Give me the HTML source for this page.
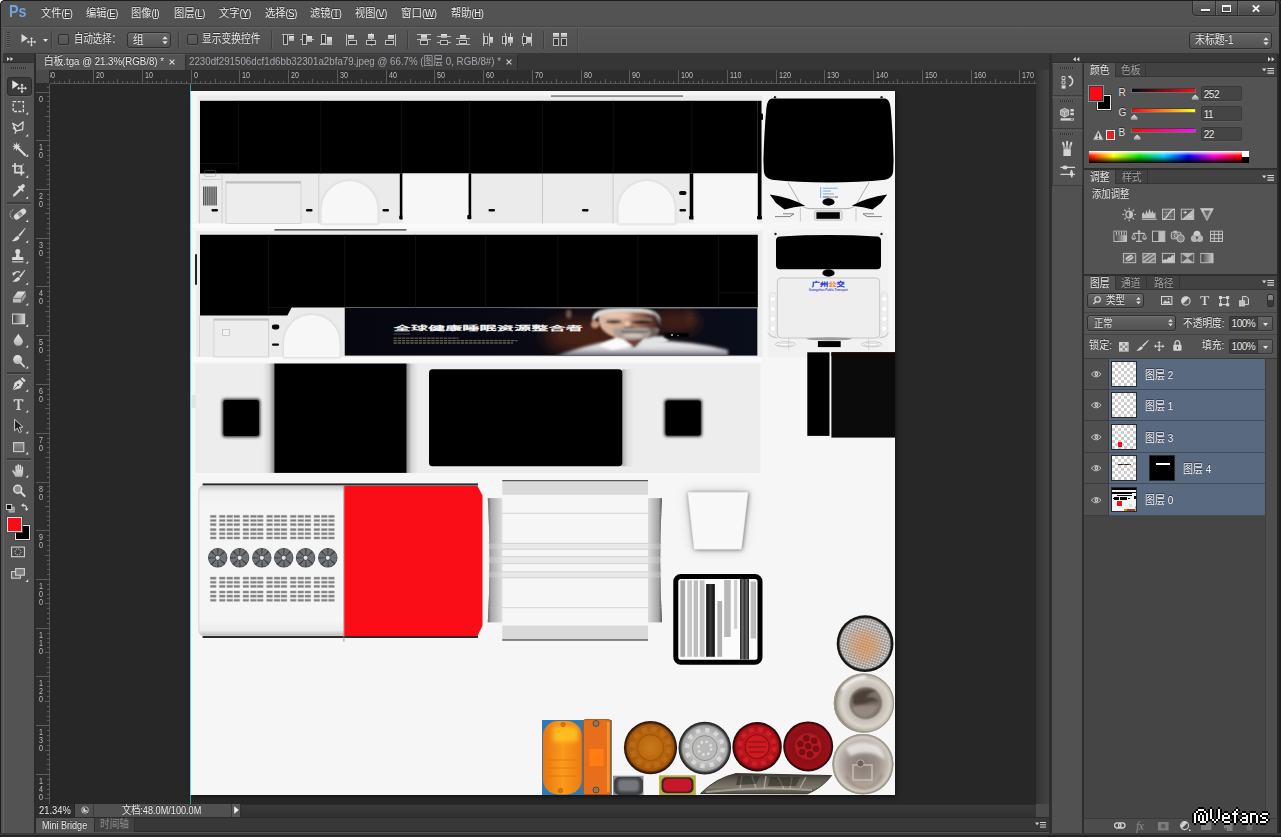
<!DOCTYPE html>
<html lang="zh"><head><meta charset="utf-8"><title>Photoshop</title><style>
html,body{margin:0;padding:0;background:#161616;}
body{width:1281px;height:837px;overflow:hidden;position:relative;font-family:"Liberation Sans","Noto Sans CJK SC",sans-serif;font-size:12px;color:#e6e6e6;}
div{position:absolute;box-sizing:border-box;}
svg{position:absolute;overflow:visible}
.t{white-space:nowrap;line-height:14px;font-size:12px;color:#e6e6e6;text-shadow:0 -1px 0 rgba(0,0,0,.5);}

.menubar{left:0;top:0;width:1281px;height:27px;}
.optbar{left:3px;top:27px;width:1275px;height:27px;background:linear-gradient(#565656,#515151);border-top:1px solid #636363;border-bottom:1px solid #373737;border-left:1px solid #606060}
.tabbar{left:36px;top:54px;width:1013px;height:16px;background:#363636;}
.ruler{background:#2d2d2d;}
.canvas{left:50px;top:84px;width:986px;height:719.5px;background:#272727;overflow:hidden}
.sep{width:2px;height:18px;top:31px;background:#3e3e3e;border-right:1px solid #5d5d5d}
.cb{width:11px;height:11px;top:34px;background:linear-gradient(#5f5f5f,#555);border:1px solid #2f2f2f;border-radius:2px;box-shadow:0 1px 0 #626262}
.dd{background:linear-gradient(#656565,#525252);border:1px solid #2e2e2e;border-radius:3px;box-shadow:0 1px 0 #5e5e5e, inset 0 1px 0 #727272}
.rl{font-size:8.5px;line-height:9px;color:#b9bec4;white-space:nowrap;transform:scaleX(.84);transform-origin:0 0}
.tsep{left:7px;width:24px;height:2px;background:#3b3b3b;border-bottom:1px solid #616161}

.doc{left:191px;top:91px;width:704px;height:704px;background:#f6f6f6;box-shadow:1px 2px 4px rgba(0,0,0,.55);overflow:hidden}

.ptabrow{left:1084px;width:193px;height:14px;background:#424242;border-bottom:1px solid #353535}
.ptab{height:14px;background:#535353;border-right:1px solid #343434}
.ptabi{height:14px;border-right:1px solid #343434}
.pbody{left:1084px;width:193px;background:#535353}
.vbox{background:#454545;border:1px solid #3a3a3a;border-radius:2px;box-shadow:0 1px 0 #5d5d5d}
.cgrp{left:1052px;width:30px;background:#525252;border:1px solid #3c3c3c;border-top-color:#5c5c5c}
.lrow{left:1108.6px;width:156.6px;background:#596980;border-bottom:1px solid #404b5c}
.eye{left:1084px;width:24.6px;background:#4f4f4f;border-bottom:1px solid #3c3c3c;border-right:1px solid #3c3c3c}
.th{width:25.4px;height:25.8px;border:1px solid #2a2a2a;background-color:#fff;background-image:linear-gradient(45deg,#ccc 25%,transparent 25%,transparent 75%,#ccc 75%),linear-gradient(45deg,#ccc 25%,transparent 25%,transparent 75%,#ccc 75%);background-size:6px 6px;background-position:0 0,3px 3px;overflow:hidden}
</style></head><body><!-- s_top --><div style="left:0px;top:0px;width:5px;height:5px;background:#fff"></div><div style="left:0px;top:0px;width:1281px;height:837px;background:#535353;border-radius:5px 4px 0 0"></div><div class="menubar"><div style="left:8.6px;top:3.3px;font:bold 17px/18px 'Liberation Sans',sans-serif;color:#6fa4de;transform:scaleX(.84);transform-origin:0 0">Ps</div><div class="t" style="left:41px;top:6px;font-size:11px;line-height:14px;color:#ececec;transform:scaleX(0.930);transform-origin:0 0">文件<span style="font-size:10px;letter-spacing:-0.3px">(<u>F</u>)</span></div><div class="t" style="left:86px;top:6px;font-size:11px;line-height:14px;color:#ececec;transform:scaleX(0.930);transform-origin:0 0">编辑<span style="font-size:10px;letter-spacing:-0.3px">(<u>E</u>)</span></div><div class="t" style="left:131px;top:6px;font-size:11px;line-height:14px;color:#ececec;transform:scaleX(0.930);transform-origin:0 0">图像<span style="font-size:10px;letter-spacing:-0.3px">(<u>I</u>)</span></div><div class="t" style="left:173.5px;top:6px;font-size:11px;line-height:14px;color:#ececec;transform:scaleX(0.930);transform-origin:0 0">图层<span style="font-size:10px;letter-spacing:-0.3px">(<u>L</u>)</span></div><div class="t" style="left:218.5px;top:6px;font-size:11px;line-height:14px;color:#ececec;transform:scaleX(0.930);transform-origin:0 0">文字<span style="font-size:10px;letter-spacing:-0.3px">(<u>Y</u>)</span></div><div class="t" style="left:264.5px;top:6px;font-size:11px;line-height:14px;color:#ececec;transform:scaleX(0.930);transform-origin:0 0">选择<span style="font-size:10px;letter-spacing:-0.3px">(<u>S</u>)</span></div><div class="t" style="left:309.5px;top:6px;font-size:11px;line-height:14px;color:#ececec;transform:scaleX(0.930);transform-origin:0 0">滤镜<span style="font-size:10px;letter-spacing:-0.3px">(<u>T</u>)</span></div><div class="t" style="left:354.5px;top:6px;font-size:11px;line-height:14px;color:#ececec;transform:scaleX(0.930);transform-origin:0 0">视图<span style="font-size:10px;letter-spacing:-0.3px">(<u>V</u>)</span></div><div class="t" style="left:401px;top:6px;font-size:11px;line-height:14px;color:#ececec;transform:scaleX(0.960);transform-origin:0 0">窗口<span style="font-size:10px;letter-spacing:-0.3px">(<u>W</u>)</span></div><div class="t" style="left:450.5px;top:6px;font-size:11px;line-height:14px;color:#ececec;transform:scaleX(0.930);transform-origin:0 0">帮助<span style="font-size:10px;letter-spacing:-0.3px">(<u>H</u>)</span></div></div><div style="left:1192px;top:-1px;width:84px;height:17px;background:linear-gradient(#666,#474747);border:1px solid #2b2b2b;border-radius:0 0 4px 4px;box-shadow:0 1px 0 #5f5f5f, inset 0 0 0 1px rgba(255,255,255,.06)"></div><div style="left:1215px;top:0px;width:1px;height:15px;background:#2f2f2f;box-shadow:1px 0 0 #626262"></div><div style="left:1237px;top:0px;width:1px;height:15px;background:#2f2f2f;box-shadow:1px 0 0 #626262"></div><div style="left:1200.5px;top:8.5px;width:9px;height:2.5px;background:#f2f2f2;box-shadow:0 1px 1px rgba(0,0,0,.5)"></div><div style="left:1222px;top:4.5px;width:9px;height:7px;border:1.5px solid #f2f2f2;border-top-width:2px;box-shadow:0 1px 1px rgba(0,0,0,.5)"></div><svg style="left:1252px;top:4.5px;" width="8" height="7" viewBox="0 0 8 7"><path d="M0.8 0.3 L7.2 6.7 M7.2 0.3 L0.8 6.7" stroke="#f2f2f2" stroke-width="1.9"/></svg><div style="left:3px;top:26px;width:1275px;height:1px;background:#454545"></div><div class="optbar"></div><div style="left:7px;top:32px;width:3px;height:16px;background:repeating-linear-gradient(#333 0,#333 1px,#686868 1px,#686868 2px)"></div><svg style="left:21px;top:33px;" width="16" height="13" viewBox="0 0 16 13"><path d="M0.5 1 L0.5 9.5 L6.8 5.2Z" fill="#d8d8d8"/><path d="M10.5 5.2 V12.6 M6.8 8.9 H14.2" stroke="#d8d8d8" stroke-width="1"/><path d="M10.5 4.2 l-1.6 1.8 h3.2z M10.5 13.6 l-1.6 -1.8 h3.2z M5.8 8.9 l1.8 -1.6 v3.2z M15.2 8.9 l-1.8 -1.6 v3.2z" fill="#d8d8d8"/></svg><svg style="left:42.5px;top:39px;" width="5" height="3" viewBox="0 0 5 3"><path d="M0 0 H5 L2.5 3Z" fill="#e0e0e0"/></svg><div class="sep" style="left:51px;top:31px;width:2px;height:18px;"></div><div class="cb" style="left:58px;top:34px;width:11px;height:11px;"></div><div class="t" style="left:74px;top:32.4px;font-size:12px;line-height:14px;transform:scaleX(0.7833);transform-origin:0 0;">自动选择：</div><div class="dd" style="left:126.5px;top:31.5px;width:44.5px;height:16.5px;"></div><div class="t" style="left:132.6px;top:32.6px;font-size:12px;line-height:14px;transform:scaleX(0.8833);transform-origin:0 0;">组</div><svg style="left:162px;top:36px;" width="6" height="9" viewBox="0 0 6 9"><path d="M0.3 3.2 L3 0.2 L5.7 3.2Z M0.3 5.3 L3 8.3 L5.7 5.3Z" fill="#e2e2e2"/></svg><div class="sep" style="left:178px;top:31px;width:2px;height:18px;"></div><div class="cb" style="left:186.5px;top:34px;width:11px;height:11px;"></div><div class="t" style="left:201.6px;top:32.4px;font-size:12px;line-height:14px;transform:scaleX(0.8139);transform-origin:0 0;">显示变换控件</div><div class="sep" style="left:271px;top:31px;width:2px;height:18px;"></div><div class="sep" style="left:407px;top:31px;width:2px;height:18px;"></div><div class="sep" style="left:543px;top:31px;width:2px;height:18px;"></div><div style="left:576.5px;top:28px;width:2px;height:25px;background:#474747;border-right:1px solid #5c5c5c"></div><svg style="left:0;top:0" width="600" height="54" viewBox="0 0 600 54" shape-rendering="crispEdges"><defs><linearGradient id="fg" x1="0" y1="0" x2="0" y2="1"><stop offset="0" stop-color="#e6e6e6"/><stop offset="1" stop-color="#a8a8a8"/></linearGradient></defs><rect x="282" y="34" width="12" height="1" fill="#bcbcbc"/><rect x="283.5" y="34.5" width="4" height="10" fill="#3a3a3a" stroke="#bcbcbc" stroke-width="1"/><rect x="289" y="36" width="5" height="5" fill="url(#fg)"/><rect x="300" y="39" width="14" height="1" fill="#bcbcbc"/><rect x="302.5" y="34.5" width="4" height="10" fill="#3a3a3a" stroke="#bcbcbc" stroke-width="1"/><rect x="307" y="36" width="5" height="6" fill="url(#fg)"/><rect x="320" y="44" width="12" height="1" fill="#bcbcbc"/><rect x="321.5" y="34.5" width="4" height="9" fill="#3a3a3a" stroke="#bcbcbc" stroke-width="1"/><rect x="327" y="37" width="5" height="7" fill="url(#fg)"/><rect x="346" y="34" width="1" height="12" fill="#bcbcbc"/><rect x="348" y="35" width="6" height="4" fill="url(#fg)"/><rect x="348.5" y="40.5" width="8" height="4" fill="#3a3a3a" stroke="#bcbcbc" stroke-width="1"/><rect x="371" y="33" width="1" height="13" fill="#bcbcbc"/><rect x="368" y="34" width="6" height="5" fill="url(#fg)"/><rect x="366.5" y="40.5" width="9" height="4" fill="#3a3a3a" stroke="#bcbcbc" stroke-width="1"/><rect x="395" y="34" width="1" height="12" fill="#bcbcbc"/><rect x="388" y="35" width="6" height="4" fill="url(#fg)"/><rect x="385.5" y="40.5" width="8" height="4" fill="#3a3a3a" stroke="#bcbcbc" stroke-width="1"/><rect x="417" y="34" width="14" height="1" fill="#bcbcbc"/><rect x="421" y="35" width="6" height="4" fill="url(#fg)"/><rect x="417" y="39" width="14" height="1" fill="#bcbcbc"/><rect x="420.5" y="40.5" width="7" height="4" fill="#3a3a3a" stroke="#bcbcbc" stroke-width="1"/><rect x="441" y="34" width="6" height="4" fill="url(#fg)"/><rect x="437" y="36" width="14" height="1" fill="#bcbcbc"/><rect x="440.5" y="40.5" width="7" height="4" fill="#3a3a3a" stroke="#bcbcbc" stroke-width="1"/><rect x="437" y="42" width="3" height="1" fill="#bcbcbc"/><rect x="448" y="42" width="3" height="1" fill="#bcbcbc"/><rect x="460" y="35" width="6" height="4" fill="url(#fg)"/><rect x="456" y="38" width="14" height="1" fill="#bcbcbc"/><rect x="459.5" y="40.5" width="7" height="3" fill="#3a3a3a" stroke="#bcbcbc" stroke-width="1"/><rect x="456" y="44" width="14" height="1" fill="#bcbcbc"/><rect x="483" y="33" width="1" height="13" fill="#bcbcbc"/><rect x="484.5" y="36.5" width="3" height="7" fill="#3a3a3a" stroke="#bcbcbc" stroke-width="1"/><rect x="489" y="33" width="1" height="13" fill="#bcbcbc"/><rect x="490" y="37" width="3" height="6" fill="url(#fg)"/><rect x="502.5" y="36.5" width="4" height="7" fill="#3a3a3a" stroke="#bcbcbc" stroke-width="1"/><rect x="505" y="33" width="1" height="13" fill="#bcbcbc"/><rect x="510" y="33" width="1" height="13" fill="#bcbcbc"/><rect x="508" y="37" width="5" height="6" fill="url(#fg)"/><rect x="523" y="33" width="1" height="13" fill="#bcbcbc"/><rect x="522.5" y="36.5" width="4" height="7" fill="#3a3a3a" stroke="#bcbcbc" stroke-width="1"/><rect x="527" y="37" width="4" height="6" fill="url(#fg)"/><rect x="531" y="33" width="1" height="13" fill="#bcbcbc"/><rect x="553" y="33" width="6" height="4" fill="url(#fg)"/><rect x="553.5" y="38.5" width="5" height="7" fill="#3a3a3a" stroke="#bcbcbc" stroke-width="1"/><rect x="561" y="33" width="6" height="4" fill="url(#fg)"/><rect x="561.5" y="38.5" width="5" height="7" fill="#3a3a3a" stroke="#bcbcbc" stroke-width="1"/></svg><div class="dd" style="left:1188.5px;top:32px;width:83px;height:17px;"></div><div class="t" style="left:1195px;top:33.4px;font-size:12px;line-height:14px;transform:scaleX(0.8271);transform-origin:0 0;">未标题-1</div><svg style="left:1263px;top:36.5px;" width="6" height="9" viewBox="0 0 6 9"><path d="M0.3 3.2 L3 0.2 L5.7 3.2Z M0.3 5.3 L3 8.3 L5.7 5.3Z" fill="#e2e2e2"/></svg><div class="tabbar"></div><div style="left:36px;top:54px;width:150px;height:16px;background:#535353;border-right:1px solid #2e2e2e;border-top:1px solid #606060"></div><div class="t" style="left:43.5px;top:55px;font-size:11px;line-height:13px;transform:scaleX(0.8792);transform-origin:0 0;color:#e8e8e8">白板.tga @ 21.3%(RGB/8) *</div><svg style="left:168.5px;top:58.6px;" width="6" height="6" viewBox="0 0 6 6"><path d="M0.6 0.6 L5.4 5.4 M5.4 0.6 L0.6 5.4" stroke="#d8d8d8" stroke-width="1.2"/></svg><div style="left:186px;top:54px;width:332px;height:16px;background:#3e3e3e;border-right:1px solid #2c2c2c;border-top:1px solid #484848"></div><div class="t" style="left:188.5px;top:55px;font-size:11px;line-height:13px;transform:scaleX(0.8853);transform-origin:0 0;color:#a4a8ae;text-shadow:none">2230df291506dcf1d6bb32301a2bfa79.jpeg @ 66.7% (图层 0, RGB/8#) *</div><svg style="left:505.5px;top:58.6px;" width="6" height="6" viewBox="0 0 6 6"><path d="M0.6 0.6 L5.4 5.4 M5.4 0.6 L0.6 5.4" stroke="#d0d0d0" stroke-width="1.2"/></svg><div class="ruler" style="left:36px;top:70px;width:1000px;height:14px;border-bottom:1px solid #555;"></div><div class="ruler" style="left:36px;top:84px;width:14px;height:719.5px;border-right:1px solid #555;"></div><svg style="left:0;top:0" width="1040" height="805" viewBox="0 0 1040 805" shape-rendering="crispEdges"><path d="M54.5 81V84M59.5 81V84M64.5 81V84M69.5 79V84M74.5 81V84M78.5 81V84M83.5 81V84M88.5 81V84M93.5 70V84M98.5 81V84M103.5 81V84M108.5 81V84M113.5 81V84M117.5 79V84M122.5 81V84M127.5 81V84M132.5 81V84M137.5 81V84M142.5 70V84M147.5 81V84M152.5 81V84M156.5 81V84M161.5 81V84M166.5 79V84M171.5 81V84M176.5 81V84M181.5 81V84M186.5 81V84M191.5 70V84M195.5 81V84M200.5 81V84M205.5 81V84M210.5 81V84M215.5 79V84M220.5 81V84M225.5 81V84M230.5 81V84M234.5 81V84M239.5 70V84M244.5 81V84M249.5 81V84M254.5 81V84M259.5 81V84M264.5 79V84M269.5 81V84M273.5 81V84M278.5 81V84M283.5 81V84M288.5 70V84M293.5 81V84M298.5 81V84M303.5 81V84M308.5 81V84M312.5 79V84M317.5 81V84M322.5 81V84M327.5 81V84M332.5 81V84M337.5 70V84M342.5 81V84M347.5 81V84M351.5 81V84M356.5 81V84M361.5 79V84M366.5 81V84M371.5 81V84M376.5 81V84M381.5 81V84M386.5 70V84M390.5 81V84M395.5 81V84M400.5 81V84M405.5 81V84M410.5 79V84M415.5 81V84M420.5 81V84M425.5 81V84M429.5 81V84M434.5 70V84M439.5 81V84M444.5 81V84M449.5 81V84M454.5 81V84M459.5 79V84M464.5 81V84M468.5 81V84M473.5 81V84M478.5 81V84M483.5 70V84M488.5 81V84M493.5 81V84M498.5 81V84M503.5 81V84M507.5 79V84M512.5 81V84M517.5 81V84M522.5 81V84M527.5 81V84M532.5 70V84M537.5 81V84M542.5 81V84M546.5 81V84M551.5 81V84M556.5 79V84M561.5 81V84M566.5 81V84M571.5 81V84M576.5 81V84M581.5 70V84M585.5 81V84M590.5 81V84M595.5 81V84M600.5 81V84M605.5 79V84M610.5 81V84M615.5 81V84M620.5 81V84M624.5 81V84M629.5 70V84M634.5 81V84M639.5 81V84M644.5 81V84M649.5 81V84M654.5 79V84M659.5 81V84M663.5 81V84M668.5 81V84M673.5 81V84M678.5 70V84M683.5 81V84M688.5 81V84M693.5 81V84M698.5 81V84M702.5 79V84M707.5 81V84M712.5 81V84M717.5 81V84M722.5 81V84M727.5 70V84M732.5 81V84M737.5 81V84M741.5 81V84M746.5 81V84M751.5 79V84M756.5 81V84M761.5 81V84M766.5 81V84M771.5 81V84M776.5 70V84M780.5 81V84M785.5 81V84M790.5 81V84M795.5 81V84M800.5 79V84M805.5 81V84M810.5 81V84M815.5 81V84M819.5 81V84M824.5 70V84M829.5 81V84M834.5 81V84M839.5 81V84M844.5 81V84M849.5 79V84M854.5 81V84M858.5 81V84M863.5 81V84M868.5 81V84M873.5 70V84M878.5 81V84M883.5 81V84M888.5 81V84M893.5 81V84M897.5 79V84M902.5 81V84M907.5 81V84M912.5 81V84M917.5 81V84M922.5 70V84M927.5 81V84M932.5 81V84M936.5 81V84M941.5 81V84M946.5 79V84M951.5 81V84M956.5 81V84M961.5 81V84M966.5 81V84M971.5 70V84M975.5 81V84M980.5 81V84M985.5 81V84M990.5 81V84M995.5 79V84M1000.5 81V84M1005.5 81V84M1010.5 81V84M1014.5 81V84M1019.5 70V84M1024.5 81V84M1029.5 81V84M1034.5 81V84" stroke="#5c5c5c" stroke-width="1"/><path d="M47 87.5H50M36 92.5H50M47 96.5H50M47 101.5H50M47 106.5H50M47 111.5H50M45 116.5H50M47 121.5H50M47 126.5H50M47 130.5H50M47 135.5H50M36 140.5H50M47 145.5H50M47 150.5H50M47 155.5H50M47 160.5H50M45 165.5H50M47 170.5H50M47 174.5H50M47 179.5H50M47 184.5H50M36 189.5H50M47 194.5H50M47 199.5H50M47 204.5H50M47 208.5H50M45 213.5H50M47 218.5H50M47 223.5H50M47 228.5H50M47 233.5H50M36 238.5H50M47 243.5H50M47 248.5H50M47 252.5H50M47 257.5H50M45 262.5H50M47 267.5H50M47 272.5H50M47 277.5H50M47 282.5H50M36 286.5H50M47 291.5H50M47 296.5H50M47 301.5H50M47 306.5H50M45 311.5H50M47 316.5H50M47 321.5H50M47 326.5H50M47 330.5H50M36 335.5H50M47 340.5H50M47 345.5H50M47 350.5H50M47 355.5H50M45 360.5H50M47 364.5H50M47 369.5H50M47 374.5H50M47 379.5H50M36 384.5H50M47 389.5H50M47 394.5H50M47 399.5H50M47 404.5H50M45 408.5H50M47 413.5H50M47 418.5H50M47 423.5H50M47 428.5H50M36 433.5H50M47 438.5H50M47 442.5H50M47 447.5H50M47 452.5H50M45 457.5H50M47 462.5H50M47 467.5H50M47 472.5H50M47 477.5H50M36 482.5H50M47 486.5H50M47 491.5H50M47 496.5H50M47 501.5H50M45 506.5H50M47 511.5H50M47 516.5H50M47 520.5H50M47 525.5H50M36 530.5H50M47 535.5H50M47 540.5H50M47 545.5H50M47 550.5H50M45 555.5H50M47 560.5H50M47 564.5H50M47 569.5H50M47 574.5H50M36 579.5H50M47 584.5H50M47 589.5H50M47 594.5H50M47 598.5H50M45 603.5H50M47 608.5H50M47 613.5H50M47 618.5H50M47 623.5H50M36 628.5H50M47 633.5H50M47 638.5H50M47 642.5H50M47 647.5H50M45 652.5H50M47 657.5H50M47 662.5H50M47 667.5H50M47 672.5H50M36 676.5H50M47 681.5H50M47 686.5H50M47 691.5H50M47 696.5H50M45 701.5H50M47 706.5H50M47 711.5H50M47 716.5H50M47 720.5H50M36 725.5H50M47 730.5H50M47 735.5H50M47 740.5H50M47 745.5H50M45 750.5H50M47 754.5H50M47 759.5H50M47 764.5H50M47 769.5H50M36 774.5H50M47 779.5H50M47 784.5H50M47 789.5H50M47 794.5H50M45 798.5H50" stroke="#5c5c5c" stroke-width="1"/></svg><div class="rl" style="left:47px;top:71px">30</div><div class="rl" style="left:96px;top:71px">20</div><div class="rl" style="left:145px;top:71px">10</div><div class="rl" style="left:194px;top:71px">0</div><div class="rl" style="left:242px;top:71px">10</div><div class="rl" style="left:291px;top:71px">20</div><div class="rl" style="left:340px;top:71px">30</div><div class="rl" style="left:389px;top:71px">40</div><div class="rl" style="left:437px;top:71px">50</div><div class="rl" style="left:486px;top:71px">60</div><div class="rl" style="left:535px;top:71px">70</div><div class="rl" style="left:584px;top:71px">80</div><div class="rl" style="left:632px;top:71px">90</div><div class="rl" style="left:681px;top:71px">100</div><div class="rl" style="left:730px;top:71px">110</div><div class="rl" style="left:779px;top:71px">120</div><div class="rl" style="left:827px;top:71px">130</div><div class="rl" style="left:876px;top:71px">140</div><div class="rl" style="left:925px;top:71px">150</div><div class="rl" style="left:974px;top:71px">160</div><div class="rl" style="left:1022px;top:71px">170</div><div class="rl" style="left:39px;top:95px;line-height:8px">0</div><div class="rl" style="left:39px;top:143px;line-height:8px">1<br>0</div><div class="rl" style="left:39px;top:192px;line-height:8px">2<br>0</div><div class="rl" style="left:39px;top:241px;line-height:8px">3<br>0</div><div class="rl" style="left:39px;top:289px;line-height:8px">4<br>0</div><div class="rl" style="left:39px;top:338px;line-height:8px">5<br>0</div><div class="rl" style="left:39px;top:387px;line-height:8px">6<br>0</div><div class="rl" style="left:39px;top:436px;line-height:8px">7<br>0</div><div class="rl" style="left:39px;top:485px;line-height:8px">8<br>0</div><div class="rl" style="left:39px;top:533px;line-height:8px">9<br>0</div><div class="rl" style="left:39px;top:582px;line-height:8px">1<br>0<br>0</div><div class="rl" style="left:39px;top:631px;line-height:8px">1<br>1<br>0</div><div class="rl" style="left:39px;top:679px;line-height:8px">1<br>2<br>0</div><div class="rl" style="left:39px;top:728px;line-height:8px">1<br>3<br>0</div><div class="rl" style="left:39px;top:777px;line-height:8px">1<br>4<br>0</div><div style="left:36px;top:70px;width:14px;height:14px;background:#4a4a4a;border-right:1px solid #2d2d2d;border-bottom:1px solid #2d2d2d"></div><div class="canvas"></div><!-- s_tools --><div style="left:3px;top:54px;width:33px;height:783px;background:#535353;border-left:1px solid #626262;border-right:2px solid #2b2b2b"></div><div style="left:3px;top:54px;width:31px;height:9px;background:#383838;border-bottom:1px solid #2c2c2c"></div><svg style="left:7px;top:57px;" width="7" height="4" viewBox="0 0 7 4"><path d="M0 0 L2.8 2 L0 4Z M3.4 0 L6.2 2 L3.4 4Z" fill="#d8d8d8"/></svg><div style="left:11px;top:67px;width:16px;height:2px;background:repeating-linear-gradient(90deg,#2f2f2f 0,#2f2f2f 1px,#5c5c5c 1px,#5c5c5c 2px)"></div><div style="left:6.5px;top:76.5px;width:25px;height:19px;background:#3a3a3a;border:1px solid #2c2c2c;border-radius:3px;box-shadow:0 1px 0 #636363"></div><svg style="left:0;top:0" width="36" height="600" viewBox="0 0 36 600"><defs><linearGradient id="tg" x1="0" y1="0" x2="1" y2="0"><stop offset="0" stop-color="#333"/><stop offset="1" stop-color="#dcdcdc"/></linearGradient><linearGradient id="tr" x1="0" y1="0" x2="0" y2="1"><stop offset="0" stop-color="#8e8e8e"/><stop offset="1" stop-color="#666"/></linearGradient><linearGradient id="lg" x1="0" y1="0" x2="0" y2="1"><stop offset="0" stop-color="#e8e8e8"/><stop offset="1" stop-color="#b4b4b4"/></linearGradient></defs><g transform="translate(12 80)"><path d="M0.3 0.2 V9 L6.8 4.6Z" fill="#e2e2e2"/><path d="M10 4.6 V12 M6.3 8.3 H13.7" stroke="#e2e2e2" stroke-width="1.1"/><path d="M10 3.4 l-1.7 2 h3.4z M10 13.2 l-1.7 -2 h3.4z M5.1 8.3 l2 -1.7 v3.4z M14.9 8.3 l-2 -1.7 v3.4z" fill="#e2e2e2"/></g><g transform="translate(12.5 101)"><rect x="0.7" y="0.7" width="10.2" height="9.8" fill="none" stroke="#d9d9d9" stroke-width="1.3" stroke-dasharray="3 1.4"/></g><path d="M28.2 114.5 V111.9 L25.6 114.5Z" fill="#e4e4e4"/><g transform="translate(12 121)"><path d="M0.7 2.2 L6 5.2 L11.2 0.8 L10.6 8.6 L4.2 9.8 Z M4.2 9.8 L2.8 12.8 M4.2 9.8 L1 6.5" fill="none" stroke="#d9d9d9" stroke-width="1.25" stroke-linejoin="round"/></g><path d="M28.2 136.6 V134 L25.6 136.6Z" fill="#e4e4e4"/><g transform="translate(12 142)"><path d="M4.5 0 L5.3 3 L8 1 L6.4 3.9 L9.2 4.5 L6.4 5.3 L8 8 L5.3 6.2 L4.5 9.2 L3.7 6.2 L1 8 L2.6 5.3 L0 4.5 L2.6 3.8 L1 1 L3.7 3 Z" fill="#d9d9d9"/><path d="M6 6 L13 13" stroke="#d9d9d9" stroke-width="2.2" stroke-linecap="round"/></g><path d="M28.2 156.7 V154.1 L25.6 156.7Z" fill="#e4e4e4"/><g transform="translate(12 163)"><path d="M3 0 V9.6 H12.4 M0 3 H9.4 V12.6" fill="none" stroke="#d9d9d9" stroke-width="1.7"/><path d="M6.2 6.4 L11.8 0.8" stroke="#d9d9d9" stroke-width="0.8"/></g><path d="M28.2 177.7 V175.1 L25.6 177.7Z" fill="#e4e4e4"/><g transform="translate(12.5 183.5)"><path d="M0.3 13.2 L1 10.8 L7.2 4.6 L8.9 6.3 L2.7 12.5 Z" fill="#d9d9d9"/><path d="M6.3 3.2 L10.3 7.2" stroke="#d9d9d9" stroke-width="1.8" stroke-linecap="round"/><path d="M8.2 4.8 L10.6 2.4" stroke="#d9d9d9" stroke-width="3.6" stroke-linecap="round"/></g><path d="M28.2 198.8 V196.2 L25.6 198.8Z" fill="#e4e4e4"/><g transform="translate(10 207.5)"><path d="M3.2 2.2 A5 5 0 0 0 3.6 11.6" fill="none" stroke="#d9d9d9" stroke-width="1" stroke-dasharray="1.2 1.2"/><rect x="3" y="3.8" width="14" height="5.6" rx="2.8" fill="#d9d9d9" transform="rotate(-38 10 6.6)"/><rect x="8" y="4.6" width="4" height="4" fill="#8a8a8a" transform="rotate(-38 10 6.6)"/></g><path d="M28.2 222 V219.4 L25.6 222Z" fill="#e4e4e4"/><g transform="translate(11.5 228)"><path d="M14.2 0.3 L8.4 8.4 L6.8 7.2 L13.4 0Z" fill="#d9d9d9"/><path d="M6.2 7.8 L8 9.4 C7.2 12.4 3.2 13.8 0.2 13 C2.6 12 3.2 9.2 6.2 7.8Z" fill="#d9d9d9"/></g><path d="M28.2 242.8 V240.2 L25.6 242.8Z" fill="#e4e4e4"/><g transform="translate(12 249)"><circle cx="5.75" cy="2.6" r="2.5" fill="#d9d9d9"/><path d="M4.4 4 H7.1 L7.6 8 H10.6 A0.8 0.8 0 0 1 11.4 8.8 V11 H0.1 V8.8 A0.8 0.8 0 0 1 0.9 8 H3.9Z" fill="#d9d9d9"/><rect x="0.1" y="12.3" width="11.3" height="1.1" fill="#d9d9d9"/></g><path d="M28.2 263.6 V261 L25.6 263.6Z" fill="#e4e4e4"/><g transform="translate(12 270)"><path d="M13.4 0.2 L8.6 7.4 L7 6.2 L12.6 0Z" fill="#d9d9d9"/><path d="M6.4 6.8 L8.2 8.4 C7.4 11 3.6 12.4 0.4 11.6 C2.8 10.6 3.4 8.2 6.4 6.8Z" fill="#d9d9d9"/><path d="M1.6 4.2 C2.6 1.6 6 1 8 2.4" fill="none" stroke="#d9d9d9" stroke-width="1.3"/><path d="M0.4 2.2 L4 3.6 L1 6Z" fill="#d9d9d9"/></g><path d="M28.2 284.8 V282.2 L25.6 284.8Z" fill="#e4e4e4"/><g transform="translate(12.5 291)"><path d="M5.2 0.6 L13.2 0.6 L8.6 7 L0.4 7Z" fill="url(#lg)"/><path d="M0.4 7.6 L8.6 7.6 L8.6 11.6 L0.4 11.6Z" fill="#bdbdbd"/><path d="M9.2 7.2 L13.4 1.4 L13.4 5.4 L9.2 11.4Z" fill="#9c9c9c"/></g><path d="M28.2 305.6 V303 L25.6 305.6Z" fill="#e4e4e4"/><g transform="translate(12 313.5)"><rect x="0.6" y="0.6" width="12" height="9.6" fill="url(#tg)" stroke="#d0d0d0" stroke-width="1.1"/></g><path d="M28.2 326.7 V324.1 L25.6 326.7Z" fill="#e4e4e4"/><g transform="translate(13.5 333.5)"><path d="M4.8 0 C6.2 3.4 9.4 5.4 9.4 8 A4.6 4.2 0 0 1 0.2 8 C0.2 5.4 3.4 3.4 4.8 0Z" fill="url(#lg)"/></g><path d="M28.2 347.5 V344.9 L25.6 347.5Z" fill="#e4e4e4"/><g transform="translate(13 355)"><circle cx="4.6" cy="4.6" r="4.5" fill="url(#lg)"/><path d="M7.6 7.6 L11.2 11.6" stroke="#d9d9d9" stroke-width="1.7" stroke-linecap="round"/></g><path d="M28.2 368.6 V366 L25.6 368.6Z" fill="#e4e4e4"/><g transform="translate(12.5 377)"><path d="M0.2 13.2 L2.2 5.6 L7.4 2.6 L10.8 6 L7.8 11.2 Z" fill="#d9d9d9"/><path d="M0.6 12.8 L5.2 8.2" stroke="#535353" stroke-width="0.9"/><circle cx="5.6" cy="7.8" r="1.1" fill="#535353"/><path d="M8.2 1.8 L9.8 0.2 L13.2 3.6 L11.6 5.2Z" fill="#d9d9d9"/></g><path d="M28.2 391.8 V389.2 L25.6 391.8Z" fill="#e4e4e4"/><g transform="translate(13.5 399)"><path d="M0.2 0.2 H9.8 V3 H9 C8.8 1.6 8.4 1.2 7 1.2 H6 V9.4 C6 10 6.4 10.2 7.4 10.3 V11 H2.6 V10.3 C3.6 10.2 4 10 4 9.4 V1.2 H3 C1.6 1.2 1.2 1.6 1 3 H0.2Z" fill="#d9d9d9"/></g><path d="M28.2 412.6 V410 L25.6 412.6Z" fill="#e4e4e4"/><g transform="translate(14 418.5)"><path d="M0.6 0.8 V12.2 L3.4 9.6 L5.4 14 L7.4 13.1 L5.4 8.8 L9 8.6Z" fill="#1c1c1c" stroke="#cfcfcf" stroke-width="1" stroke-linejoin="round"/></g><path d="M28.2 433.5 V430.9 L25.6 433.5Z" fill="#e4e4e4"/><g transform="translate(13 442)"><rect x="0.6" y="0.6" width="10.2" height="9" fill="url(#tr)" stroke="#cfcfcf" stroke-width="1.1"/></g><path d="M28.2 454.4 V451.8 L25.6 454.4Z" fill="#e4e4e4"/><g transform="translate(12 464)"><path d="M3.4 12.8 C2.6 10.4 0.6 8.4 0.2 7.2 C0 6.4 1 6 1.8 6.8 L3.4 8.4 V2.2 C3.4 1.2 4.8 1.2 4.9 2.2 V5.6 H5.4 V1 C5.5 0 6.9 0 7 1 V5.6 H7.5 V1.6 C7.6 0.6 9 0.6 9.1 1.6 V6 H9.6 V3.2 C9.7 2.2 11 2.2 11.1 3.2 V9 C11.1 10.6 10.4 11.6 10 12.8Z" fill="url(#lg)"/></g><path d="M28.2 477.6 V475 L25.6 477.6Z" fill="#e4e4e4"/><g transform="translate(13 484.5)"><circle cx="4.7" cy="4.7" r="3.9" fill="#8c8c8c" stroke="#d9d9d9" stroke-width="1.6"/><path d="M7.8 7.8 L11.6 11.6" stroke="#d9d9d9" stroke-width="2.1" stroke-linecap="round"/></g><g transform="translate(6 504)"><rect x="3.1" y="3.1" width="5.2" height="5" fill="#9a9a9a" stroke="#b8b8b8" stroke-width="0.8"/><rect x="0.5" y="0.5" width="5.2" height="5" fill="#111" stroke="#d8d8d8" stroke-width="0.9"/></g><g transform="translate(21 503)"><path d="M1.6 2.2 C4.6 2 5.6 3.4 5.6 6" fill="none" stroke="#d9d9d9" stroke-width="1.2"/><path d="M0 2.2 L2.6 0.2 V4.2Z M5.6 8 L3.6 5.4 H7.6Z" fill="#d9d9d9"/></g><g transform="translate(11 546.5)"><rect x="0.6" y="0.6" width="12.8" height="9.6" fill="#474747" stroke="#d4d4d4" stroke-width="1.1"/><circle cx="7" cy="5.4" r="3" fill="none" stroke="#d4d4d4" stroke-width="1" stroke-dasharray="1.3 1"/></g><g transform="translate(11 568)"><rect x="0.6" y="3.6" width="8.8" height="6.6" fill="#646464" stroke="#d0d0d0" stroke-width="1.1"/><rect x="4.6" y="0.6" width="8.8" height="6.6" fill="#7c7c7c" stroke="#d0d0d0" stroke-width="1.1"/><rect x="5.2" y="1.2" width="7.6" height="5.4" fill="#7c7c7c" stroke="none" opacity="0.0"/></g><path d="M28.2 581.9 V579.3 L25.6 581.9Z" fill="#e4e4e4"/></svg><div class="tsep" style="left:7px;top:201.5px;width:24px;height:3px;"></div><div class="tsep" style="left:7px;top:371.5px;width:24px;height:3px;"></div><div class="tsep" style="left:7px;top:458px;width:24px;height:3px;"></div><div style="left:15px;top:525px;width:15px;height:14.5px;background:#000;border:1px solid #e6e6e6;box-shadow:0 0 0 0.5px #333"></div><div style="left:7px;top:517px;width:15px;height:14.5px;background:#fc0b16;border:1px solid #dcdcdc;box-shadow:0 0 0 1px #4a4a4a"></div><!-- s_doc --><div class="doc"><svg style="left:0;top:0" width="704" height="704" viewBox="191 91 704 704"><defs>
<filter id="b05" x="-20%" y="-200%" width="140%" height="500%"><feGaussianBlur stdDeviation="0.5"/></filter>
<filter id="b07" x="-10%" y="-10%" width="120%" height="120%"><feGaussianBlur stdDeviation="0.8"/></filter>
<filter id="b1" x="-30%" y="-30%" width="160%" height="160%"><feGaussianBlur stdDeviation="1"/></filter>
<filter id="b15" x="-30%" y="-30%" width="160%" height="160%"><feGaussianBlur stdDeviation="1.5"/></filter>
<filter id="b2" x="-30%" y="-30%" width="160%" height="160%"><feGaussianBlur stdDeviation="2"/></filter>
<filter id="b3" x="-40%" y="-40%" width="180%" height="180%"><feGaussianBlur stdDeviation="3"/></filter>
<filter id="b6" x="-50%" y="-50%" width="200%" height="200%"><feGaussianBlur stdDeviation="6"/></filter>
<filter id="b8" x="-50%" y="-50%" width="200%" height="200%"><feGaussianBlur stdDeviation="8"/></filter>
<linearGradient id="adbg" x1="0" y1="0" x2="1" y2="0"><stop offset="0" stop-color="#05060e"/><stop offset=".55" stop-color="#090a14"/><stop offset="1" stop-color="#0a0d1a"/></linearGradient>
<linearGradient id="shirt" x1="0" y1="0" x2="0" y2="1"><stop offset="0" stop-color="#f4f4f4"/><stop offset=".5" stop-color="#d4d4d8"/><stop offset=".8" stop-color="#7e7f88"/><stop offset="1" stop-color="#1c1e2a"/></linearGradient>
<linearGradient id="skin" x1="0" y1="0" x2="1" y2="0"><stop offset="0" stop-color="#dcb8a2"/><stop offset=".42" stop-color="#d2a68e"/><stop offset=".68" stop-color="#9c6a54"/><stop offset="1" stop-color="#3e221a"/></linearGradient>
<linearGradient id="adline" x1="0" y1="0" x2="1" y2="0"><stop offset="0" stop-color="#8c8c8c" stop-opacity="0"/><stop offset=".3" stop-color="#8c8c8c" stop-opacity="1"/><stop offset="1" stop-color="#8c8c8c"/></linearGradient>
<clipPath id="adclip"><rect x="344.5" y="307.6" width="413.1" height="48.2"/></clipPath>

<linearGradient id="shl" x1="1" y1="0" x2="0" y2="0"><stop offset="0" stop-color="#000" stop-opacity=".42"/><stop offset=".45" stop-color="#000" stop-opacity=".1"/><stop offset="1" stop-color="#000" stop-opacity="0"/></linearGradient>
<linearGradient id="shr" x1="0" y1="0" x2="1" y2="0"><stop offset="0" stop-color="#000" stop-opacity=".42"/><stop offset=".45" stop-color="#000" stop-opacity=".1"/><stop offset="1" stop-color="#000" stop-opacity="0"/></linearGradient>
<linearGradient id="acg" x1="0" y1="0" x2="0" y2="1"><stop offset="0" stop-color="#c8c8c8"/><stop offset=".04" stop-color="#f0f0f0"/><stop offset=".12" stop-color="#f5f5f5"/><stop offset=".9" stop-color="#f5f5f5"/><stop offset=".965" stop-color="#ececec"/><stop offset="1" stop-color="#bdbdbd"/></linearGradient>
<linearGradient id="sideL" x1="0" y1="0" x2="1" y2="0"><stop offset="0" stop-color="#6e6e6e"/><stop offset=".25" stop-color="#aaa"/><stop offset="1" stop-color="#dedede"/></linearGradient>
<linearGradient id="sideR" x1="1" y1="0" x2="0" y2="0"><stop offset="0" stop-color="#555"/><stop offset=".25" stop-color="#a4a4a4"/><stop offset="1" stop-color="#dcdcdc"/></linearGradient>
<linearGradient id="dbar" x1="0" y1="0" x2="1" y2="0"><stop offset="0" stop-color="#0a0a0a"/><stop offset=".5" stop-color="#3a3a3a"/><stop offset="1" stop-color="#0a0a0a"/></linearGradient>
<linearGradient id="dbar2" x1="0" y1="0" x2="1" y2="0"><stop offset="0" stop-color="#2a2a2a"/><stop offset=".3" stop-color="#6a6a6a"/><stop offset=".5" stop-color="#333"/><stop offset=".7" stop-color="#666"/><stop offset="1" stop-color="#222"/></linearGradient>
<radialGradient id="led"><stop offset="0" stop-color="#cfa284"/><stop offset=".45" stop-color="#c4ac9c"/><stop offset=".8" stop-color="#bdb9b5"/><stop offset="1" stop-color="#a8a6a4"/></radialGradient>
<pattern id="ledp" x="0" y="0" width="2.7" height="2.7" patternUnits="userSpaceOnUse" patternTransform="rotate(18)"><circle cx="1.35" cy="1.35" r="1" fill="#eeeceb"/></pattern>
<radialGradient id="ledo"><stop offset="0" stop-color="#e98c3c" stop-opacity=".62"/><stop offset=".55" stop-color="#e6904a" stop-opacity=".38"/><stop offset="1" stop-color="#e6904a" stop-opacity="0"/></radialGradient>
<radialGradient id="hl2" cx=".53" cy=".5"><stop offset="0" stop-color="#6e625c"/><stop offset=".5" stop-color="#80746c"/><stop offset=".58" stop-color="#c2bcb4"/><stop offset=".8" stop-color="#d8d4cc"/><stop offset=".92" stop-color="#bcb6a8"/><stop offset="1" stop-color="#8e887a"/></radialGradient>
<radialGradient id="hl3"><stop offset="0" stop-color="#857a72"/><stop offset=".5" stop-color="#9c9088"/><stop offset=".78" stop-color="#bdb6ae"/><stop offset=".9" stop-color="#cfcac2"/><stop offset="1" stop-color="#9e9888"/></radialGradient>
<radialGradient id="amber"><stop offset="0" stop-color="#c87a1c"/><stop offset=".5" stop-color="#b9660f"/><stop offset=".86" stop-color="#a3560c"/><stop offset=".93" stop-color="#4a2408"/><stop offset="1" stop-color="#1c0e06"/></radialGradient>
<radialGradient id="clear"><stop offset="0" stop-color="#bdbdbd"/><stop offset=".5" stop-color="#c6c6c6"/><stop offset=".84" stop-color="#a6a6a6"/><stop offset=".93" stop-color="#3a3a3a"/><stop offset="1" stop-color="#1a1a1a"/></radialGradient>
<radialGradient id="red1"><stop offset="0" stop-color="#d41c24"/><stop offset=".5" stop-color="#c4161e"/><stop offset=".86" stop-color="#a81018"/><stop offset=".94" stop-color="#3a080a"/><stop offset="1" stop-color="#1a0405"/></radialGradient>
<radialGradient id="red2"><stop offset="0" stop-color="#b81c24"/><stop offset=".5" stop-color="#b01a22"/><stop offset=".56" stop-color="#8c0e16"/><stop offset=".88" stop-color="#98101a"/><stop offset=".95" stop-color="#3a080a"/><stop offset="1" stop-color="#1a0405"/></radialGradient>
<linearGradient id="or1" x1="0" y1="0" x2="1" y2="0"><stop offset="0" stop-color="#e87410"/><stop offset=".5" stop-color="#fb9a1c"/><stop offset="1" stop-color="#ee7a12"/></linearGradient>
<linearGradient id="lens" x1="0" y1="0" x2="0" y2="1"><stop offset="0" stop-color="#3a3630"/><stop offset=".35" stop-color="#625d55"/><stop offset=".7" stop-color="#7d776c"/><stop offset="1" stop-color="#4a463f"/></linearGradient>

</defs><rect x="197.5" y="95.5" width="565" height="128" fill="#ebebeb" /><rect x="191" y="223.5" width="571.5" height="4.5" fill="#fafafa" /><rect x="551" y="95.5" width="132" height="1.1" fill="#4a4a4a" filter="url(#b05)"/><rect x="200" y="100.8" width="557.8" height="72.7" fill="#000" /><path d="M238.3 100.8V173.5" stroke="#191919" stroke-width="0.7"/><path d="M320.8 100.8V173.5" stroke="#191919" stroke-width="0.7"/><path d="M401.5 100.8V173.5" stroke="#191919" stroke-width="0.7"/><path d="M469.7 100.8V173.5" stroke="#191919" stroke-width="0.7"/><path d="M542.3 100.8V173.5" stroke="#191919" stroke-width="0.7"/><path d="M613.2 100.8V173.5" stroke="#191919" stroke-width="0.7"/><path d="M691.8 100.8V173.5" stroke="#191919" stroke-width="0.7"/><path d="M200 163.6H238.3" stroke="#191919" stroke-width="0.7"/><path d="M199.5 173.5V223.5" stroke="#c6c6c6" stroke-width="0.7"/><path d="M222 173.5V223.5" stroke="#c6c6c6" stroke-width="0.7"/><rect x="204.5" y="170.5" width="11.3" height="6" rx="1.5" fill="none" stroke="#8a8a8a" stroke-width="0.6" opacity=".6"/><path d="M201 179.4H221" stroke="#c4c4c4" stroke-width="0.7"/><rect x="203.2" y="186.5" width="1.2" height="19" fill="#2e2e2e" /><rect x="205.25" y="186.5" width="1.2" height="19" fill="#2e2e2e" /><rect x="207.3" y="186.5" width="1.2" height="19" fill="#2e2e2e" /><rect x="209.35" y="186.5" width="1.2" height="19" fill="#2e2e2e" /><rect x="211.4" y="186.5" width="1.2" height="19" fill="#2e2e2e" /><rect x="213.45" y="186.5" width="1.2" height="19" fill="#2e2e2e" /><rect x="215.5" y="186.5" width="1.2" height="19" fill="#2e2e2e" /><rect x="211.5" y="209" width="6.5" height="2.5" rx="1" fill="#0a0a0a"/><rect x="226" y="181.5" width="75" height="42" fill="#ededed" stroke="#c8c8c8" stroke-width="0.7"/><rect x="226" y="181.3" width="75" height="2.3" fill="#c2c2c2" /><rect x="306" y="209" width="6.5" height="2.5" rx="1" fill="#0a0a0a"/><path d="M318.8 173.5V223.5" stroke="#c4c4c4" stroke-width="0.7"/><path d="M321.6 223.5 V208.95 A27.95 27.95 0 0 1 377.5 208.95 V223.5 Z" fill="#dcdcdc" stroke="#dcdcdc" stroke-width="2.4" filter="url(#b1)"/><path d="M321.6 223.5 V208.95 A27.95 27.95 0 0 1 377.5 208.95 V223.5 Z" fill="#f7f7f7"/><rect x="382.5" y="209" width="6.5" height="2.5" rx="1" fill="#0a0a0a"/><rect x="399.8" y="173.5" width="2.8" height="45.5" fill="#000" /><rect x="399.3" y="215.5" width="4.7" height="4" fill="#000" rx="1"/><rect x="402.6" y="173.5" width="66.2" height="50" fill="#f7f7f7" /><rect x="468.6" y="173.5" width="2.6" height="45.5" fill="#000" /><rect x="467.3" y="215" width="3.9" height="4.3" fill="#000" rx="1"/><path d="M542.5 173.5V223.5" stroke="#bdbdbd" stroke-width="0.7"/><path d="M613 173.5V223.5" stroke="#bdbdbd" stroke-width="0.7"/><rect x="488.5" y="209" width="6.5" height="2.5" rx="1" fill="#0a0a0a"/><rect x="582" y="209" width="6.5" height="2.5" rx="1" fill="#0a0a0a"/><path d="M618.5 223.5 V209.1 A28.1 28.1 0 0 1 674.7 209.1 V223.5 Z" fill="#dcdcdc" stroke="#dcdcdc" stroke-width="2.4" filter="url(#b1)"/><path d="M618.5 223.5 V209.1 A28.1 28.1 0 0 1 674.7 209.1 V223.5 Z" fill="#f7f7f7"/><rect x="679" y="191" width="7.5" height="4" rx="2" fill="#0a0a0a"/><rect x="679.5" y="209" width="6.5" height="2.5" rx="1" fill="#0a0a0a"/><rect x="689.7" y="173.5" width="3.8" height="45.5" fill="#000" /><rect x="689" y="216" width="6" height="3.5" fill="#000" rx="1"/><rect x="693.5" y="173.5" width="64.3" height="50" fill="#f7f7f7" /><rect x="757.8" y="100.8" width="3.7" height="118.2" fill="#000" /><rect x="757.8" y="113.5" width="5.2" height="6.5" fill="#000" rx="1"/><rect x="757" y="216" width="5" height="3.5" fill="#000" rx="1"/><rect x="764" y="93.5" width="129.6" height="128.5" fill="#f4f4f4" /><path d="M772 98.5 H885 Q889.6 98.6 890.6 108 Q892.7 130 893.6 160 L893.1 172 Q892 178.6 885 179.8 Q860 182.5 828.5 182.5 Q797 182.5 772 179.8 Q765 178.6 763.9 172 L763.4 160 Q764.3 130 766.4 108 Q767.4 98.6 772 98.5Z" fill="#000"/><circle cx="775" cy="97.2" r="1.2" fill="#222"/><circle cx="881.6" cy="97.2" r="1.2" fill="#222"/><path d="M788 182.5 L800.5 204 Q803 208.7 812 208.7 H845 Q854 208.7 856.5 204 L869 182.5" fill="none" stroke="#8e8e8e" stroke-width="0.7"/><path d="M769.8 194.6 Q790 197.5 805.2 205.8 L794 207.2 L784.6 209.4 L776 203 Z" fill="#000"/><path d="M769.8 194.6 Q790 197.5 805.2 205.8 L794 207.2 L784.6 209.4 L776 203 Z" fill="#000" transform="translate(1657 0) scale(-1 1)"/><g opacity=".55"><rect x="820" y="187" width="1.2" height="11" fill="#3f8fd6" /><rect x="822.8" y="187.6" width="14.7" height="1.4" fill="#5a9ad8" /><rect x="822.8" y="190.4" width="8.2" height="1.4" fill="#5a9ad8" /><rect x="822.8" y="193.2" width="11.2" height="1.4" fill="#5a9ad8" /><rect x="822.8" y="196" width="6.7" height="2" fill="#3c6fd0" /><rect x="830" y="196" width="4" height="2" fill="#f08a30" /><rect x="834.5" y="196" width="3.5" height="2" fill="#3c6fd0" /></g><ellipse cx="828.5" cy="202" rx="6.1" ry="3.7" fill="#000"/><rect x="814.4" y="210.8" width="27.8" height="9.4" rx="1.5" fill="#e2e2e2" stroke="#b4b4b4" stroke-width="0.7"/><rect x="816.4" y="212.2" width="23.4" height="6.6" fill="#050505" /><path d="M800.4 208V221.5" stroke="#b8b8b8" stroke-width="0.7"/><path d="M856 208V221.5" stroke="#b8b8b8" stroke-width="0.7"/><path d="M775 216.6 H790 L794 213.8 H783" fill="none" stroke="#666" stroke-width="0.8"/><path d="M882 216.6 H867 L863 213.8 H874" fill="none" stroke="#666" stroke-width="0.8"/><rect x="196" y="231" width="566.5" height="126" fill="#ebebeb" /><rect x="191" y="357" width="571.5" height="5" fill="#fafafa" /><rect x="274.5" y="229" width="132" height="1.7" fill="#666" filter="url(#b05)"/><rect x="195" y="254" width="2" height="31" rx="1" fill="#222" filter="url(#b05)"/><path d="M200 234.8 H757.8 V307.6 H291.6 L287.4 315.4 H200Z" fill="#000"/><path d="M268.7 234.8V315.4" stroke="#191919" stroke-width="0.7"/><path d="M344.7 234.8V307.4" stroke="#191919" stroke-width="0.7"/><path d="M415.6 234.8V307.4" stroke="#191919" stroke-width="0.7"/><path d="M485.7 234.8V307.4" stroke="#191919" stroke-width="0.7"/><path d="M558 234.8V307.4" stroke="#191919" stroke-width="0.7"/><path d="M638 234.8V307.4" stroke="#191919" stroke-width="0.7"/><path d="M718.4 234.8V307.4" stroke="#191919" stroke-width="0.7"/><path d="M268.7 307.4H291" stroke="#191919" stroke-width="0.7"/><path d="M718.4 292.7H757.8" stroke="#191919" stroke-width="0.7"/><path d="M199.5 315.4V357" stroke="#c6c6c6" stroke-width="0.7"/><rect x="213.9" y="319" width="54.8" height="38" fill="#ededed" stroke="#c8c8c8" stroke-width="0.7"/><rect x="213.9" y="318.6" width="54.8" height="2" fill="#c2c2c2" /><rect x="222.7" y="329.5" width="6.9" height="6" fill="#f2f2f2" stroke="#b0b0b0" stroke-width="0.6"/><rect x="271.8" y="324.6" width="7.6" height="4.8" rx="2.4" fill="#0a0a0a"/><rect x="272" y="343.4" width="7" height="2.4" rx="1" fill="#0a0a0a"/><path d="M284 357 V342.7 A27.8 27.8 0 0 1 339.6 342.7 V357 Z" fill="#dcdcdc" stroke="#dcdcdc" stroke-width="2.4" filter="url(#b1)"/><path d="M284 357 V342.7 A27.8 27.8 0 0 1 339.6 342.7 V357 Z" fill="#f7f7f7"/><g clip-path="url(#adclip)"><rect x="344.5" y="307.6" width="413.1" height="48.2" fill="url(#adbg)" /><ellipse cx="584" cy="336" rx="40" ry="18" fill="#4a2216" filter="url(#b8)"/><ellipse cx="676" cy="322" rx="24" ry="13" fill="#3c1d12" filter="url(#b6)"/><ellipse cx="568.8" cy="314" rx="2.6" ry="4.6" fill="#8d6a58" filter="url(#b15)" opacity=".85"/><ellipse cx="690" cy="318" rx="5" ry="7" fill="#4a2a1c" filter="url(#b3)" opacity=".8"/><path d="M550 358 Q586 344.5 616 340 L632 346 L650 340.6 Q692 341 728 350 L728 358Z" fill="url(#shirt)" filter="url(#b15)"/><g filter="url(#b07)"><path d="M617 335 L651 335 L651 343 L632 347 L619 343Z" fill="#6c4234" filter="url(#b1)"/><path d="M599 345.5 Q611 339 620 336.8 L633 346.4 L612 350Z" fill="#fbfbfb" filter="url(#b05)"/><path d="M645 337.6 Q656 335.8 664 336.2 L669 341 L650 347 L636 346.4Z" fill="#e2e2e5" filter="url(#b05)"/><ellipse cx="595" cy="324.6" rx="4" ry="3.6" fill="#c8957a" filter="url(#b05)"/><path d="M599 322 C597 312 606 308.5 626 308.5 C646 308.5 657 312 657.5 323 C657.5 331 653 336 645 338.5 C637 340.5 622 340.5 615 337.5 C606 333.5 600 329 599 322Z" fill="url(#skin)" filter="url(#b05)"/><ellipse cx="618" cy="315.6" rx="14" ry="3.2" fill="#f0d2bf" opacity=".75" filter="url(#b15)"/><path d="M593 322 C590 311 602 307.6 626 307.6 C648 307.6 660 310.5 660.5 321 C657 314.4 650 312.6 638 312.2 C624 311.8 610 312 603 314.6 C597.6 316.8 595 319 593 322Z" fill="#dad6d3" filter="url(#b05)"/><path d="M650 311.5 C657 313.5 661 318 660.4 326 C658 320 656 315.5 650 311.5Z" fill="#7e7672" filter="url(#b05)"/><path d="M605 319.4 Q613 317.8 621.5 319.4 M632 319.4 Q642 318 652 319.8" stroke="#a39993" stroke-width="1" fill="none" filter="url(#b05)"/><ellipse cx="613.7" cy="321.9" rx="7.8" ry="1.7" fill="#2a1c18" filter="url(#b05)"/><ellipse cx="641.2" cy="322.1" rx="9.6" ry="1.7" fill="#20140f" filter="url(#b05)"/><ellipse cx="627.4" cy="324.4" rx="2.6" ry="3.3" fill="#efcdb8" opacity=".9" filter="url(#b05)"/><ellipse cx="629.2" cy="327.7" rx="5.2" ry="1.1" fill="#3c241c" filter="url(#b05)"/><path d="M614 328.8 C620 327.5 650 327.1 659 328.8 C660 333 655 337 646 338.6 C636 340 622 339.6 617 336.6 C613 334 613 331 614 328.8Z" fill="#a59c96" filter="url(#b05)"/><path d="M621 331.3 Q634 332.8 649 331.3" stroke="#49312a" stroke-width="1.2" fill="none" filter="url(#b05)"/><ellipse cx="633" cy="335.4" rx="10" ry="2.1" fill="#d2cbc5" opacity=".85" filter="url(#b05)"/><path d="M648 328 C656 328 660 330 659 334 C656 337 651 338.4 646 338.8 C651 336 652 332 648 328Z" fill="#5c463c" opacity=".7" filter="url(#b05)"/></g><path d="M664 333 H689 V337.5 H664Z" fill="#060606" filter="url(#b1)"/><circle cx="672" cy="335" r="0.9" fill="#ddd"/><circle cx="678" cy="335.6" r="0.7" fill="#bbb"/><g stroke="#f4f4f4" stroke-width="0.8" stroke-linejoin="round"><text transform="translate(393.4 330.23) scale(1 0.3188)" x="0" y="0" font-size="17.25" font-family="&quot;Liberation Sans&quot;,&quot;Noto Sans CJK SC&quot;,sans-serif" fill="#f6f6f6">全球健康睡眠资源整合者</text></g><path d="M393.5 334H410" stroke="#777" stroke-width="0.6"/><g stroke="#bfae8e" stroke-width="1.3" opacity=".5" stroke-dasharray="3.4 0.8" filter="url(#b05)"><path d="M393.5 338.2H458.5"/><path d="M393.5 340.6H517.6"/><path d="M393.5 343H513"/></g></g><rect x="500" y="307.3" width="257.8" height="1.1" fill="url(#adline)"/><path d="M767.6 356.7 V240 Q767.6 231 778 230.3 Q828.5 227.5 878.5 230.3 Q888.6 231 888.6 240 V356.7Z" fill="#f1f1f1"/><circle cx="775.5" cy="234" r="1.2" fill="#222"/><circle cx="881.5" cy="234" r="1.2" fill="#222"/><path d="M776 240.5 Q776 236.8 780 236.5 Q828.5 233.6 877 236.5 Q881 236.8 881 240.5 V265.3 Q881 269.3 877 269.3 H780 Q776 269.3 776 265.3Z" fill="#000"/><ellipse cx="828.5" cy="273" rx="6.2" ry="3.7" fill="#000"/><rect x="777.3" y="277.9" width="102.3" height="60.1" rx="4" fill="#eeeeee" stroke="#b4b4b4" stroke-width="0.7"/><g stroke-width="0.5" stroke-linejoin="round"><text transform="translate(811.7 286.46) scale(1 0.7229)" x="0" y="0" font-size="8.3" font-family="&quot;Liberation Sans&quot;,&quot;Noto Sans CJK SC&quot;,sans-serif"><tspan fill="#2b3fd0" stroke="#2b3fd0">广州</tspan><tspan fill="#f07a20" stroke="#f07a20">公</tspan><tspan fill="#2b3fd0" stroke="#2b3fd0">交</tspan></text></g><text x="808.8" y="291" font-size="3.4" font-family="Liberation Sans, sans-serif" font-weight="bold" fill="#3a46d8" textLength="38.9" lengthAdjust="spacingAndGlyphs">Guangzhou Public Transport</text><rect x="769.3" y="292" width="7" height="45" rx="3.5" fill="#eeeeee" stroke="#d6d6d6" stroke-width="0.6"/><circle cx="772.8" cy="298.9" r="2.5" fill="#fff" stroke="#dedede" stroke-width="0.5"/><circle cx="772.8" cy="309" r="2.5" fill="#fff" stroke="#dedede" stroke-width="0.5"/><circle cx="772.8" cy="318.8" r="2.5" fill="#fff" stroke="#dedede" stroke-width="0.5"/><circle cx="772.8" cy="328.5" r="2.5" fill="#fff" stroke="#dedede" stroke-width="0.5"/><rect x="880.8" y="292" width="7" height="45" rx="3.5" fill="#eeeeee" stroke="#d6d6d6" stroke-width="0.6"/><circle cx="884.3" cy="298.9" r="2.5" fill="#fff" stroke="#dedede" stroke-width="0.5"/><circle cx="884.3" cy="309" r="2.5" fill="#fff" stroke="#dedede" stroke-width="0.5"/><circle cx="884.3" cy="318.8" r="2.5" fill="#fff" stroke="#dedede" stroke-width="0.5"/><circle cx="884.3" cy="328.5" r="2.5" fill="#fff" stroke="#dedede" stroke-width="0.5"/><ellipse cx="829" cy="338.8" rx="23" ry="1.6" fill="#9c9c9c" filter="url(#b05)"/><path d="M767.6 333 Q772 338 777.3 338 M888.6 333 Q885 338 879.6 338" fill="none" stroke="#aaa" stroke-width="0.7"/><ellipse cx="785.4" cy="344.3" rx="10" ry="2.5" fill="#fbfbfb" stroke="#a8a8a8" stroke-width="0.6"/><ellipse cx="785.4" cy="344.6" rx="7.5" ry="1.2" fill="none" stroke="#c0c0c0" stroke-width="0.5"/><ellipse cx="871.7" cy="344.3" rx="10" ry="2.5" fill="#fbfbfb" stroke="#a8a8a8" stroke-width="0.6"/><ellipse cx="871.7" cy="344.6" rx="7.5" ry="1.2" fill="none" stroke="#c0c0c0" stroke-width="0.5"/><rect x="817.9" y="341.1" width="22.8" height="6" fill="#000" /><path d="M788.6 338V350" stroke="#c4c4c4" stroke-width="0.6"/><path d="M868.5 338V350" stroke="#c4c4c4" stroke-width="0.6"/><rect x="195" y="363.5" width="565.4" height="109.4" fill="#ededed" /><rect x="191.5" y="395" width="4.5" height="13" fill="#e4e4e4" /><rect x="263" y="363.5" width="11.3" height="109.4" fill="url(#shl)" /><rect x="406.6" y="363.5" width="11.4" height="109.4" fill="url(#shr)" /><rect x="274.3" y="363.5" width="132.3" height="109.4" fill="#000" /><rect x="622" y="369.3" width="12" height="97" fill="url(#shr)" opacity=".7"/><rect x="429" y="369.3" width="193.3" height="97" rx="3.5" fill="#000"/><rect x="222.2" y="398.7" width="38" height="38.5" rx="3" fill="#222" filter="url(#b15)"/><rect x="223.5" y="400" width="35.4" height="35.9" rx="2.5" fill="#000"/><rect x="664.3" y="399.2" width="37.7" height="37.6" rx="3" fill="#222" filter="url(#b15)"/><rect x="665.6" y="400.5" width="35.1" height="35" rx="2.5" fill="#000"/><rect x="807.3" y="352.3" width="22.2" height="83.6" fill="#000" /><rect x="831.4" y="352.3" width="63.6" height="85.3" fill="#0b0b0b" /><rect x="831.4" y="352.3" width="63.6" height="3.7" fill="#140705" /><rect x="202.6" y="483.4" width="275.4" height="2.2" fill="#2a2a2a" /><rect x="202.6" y="635.8" width="275.4" height="2.2" fill="#2a2a2a" /><path d="M344.3 486 H204 Q198.8 486 198.8 491 V630.5 Q198.8 635.5 204 635.5 H344.3Z" fill="url(#acg)" stroke="#cdcdcd" stroke-width="0.8"/><path d="M343.9 486V641.7" stroke="#8a8a8a" stroke-width="0.8"/><path d="M344.3 486 H477.5 L482.5 495.4 V625.5 L477.5 636 H344.3Z" fill="#fb0d17"/><path d="M210.4 515.3h5.7v2.1h-5.7zM210.4 519.45h5.7v2.1h-5.7zM210.4 523.6h5.7v2.1h-5.7zM210.4 528.6h5.7v2.1h-5.7zM210.4 532.75h5.7v2.1h-5.7zM210.4 536.9h5.7v2.1h-5.7zM219.4 515.3h5.7v2.1h-5.7zM219.4 519.45h5.7v2.1h-5.7zM219.4 523.6h5.7v2.1h-5.7zM219.4 528.6h5.7v2.1h-5.7zM219.4 532.75h5.7v2.1h-5.7zM219.4 536.9h5.7v2.1h-5.7zM226.9 515.3h5.7v2.1h-5.7zM226.9 519.45h5.7v2.1h-5.7zM226.9 523.6h5.7v2.1h-5.7zM226.9 528.6h5.7v2.1h-5.7zM226.9 532.75h5.7v2.1h-5.7zM226.9 536.9h5.7v2.1h-5.7zM234 515.3h5.7v2.1h-5.7zM234 519.45h5.7v2.1h-5.7zM234 523.6h5.7v2.1h-5.7zM234 528.6h5.7v2.1h-5.7zM234 532.75h5.7v2.1h-5.7zM234 536.9h5.7v2.1h-5.7zM243 515.3h5.7v2.1h-5.7zM243 519.45h5.7v2.1h-5.7zM243 523.6h5.7v2.1h-5.7zM243 528.6h5.7v2.1h-5.7zM243 532.75h5.7v2.1h-5.7zM243 536.9h5.7v2.1h-5.7zM250.6 515.3h5.7v2.1h-5.7zM250.6 519.45h5.7v2.1h-5.7zM250.6 523.6h5.7v2.1h-5.7zM250.6 528.6h5.7v2.1h-5.7zM250.6 532.75h5.7v2.1h-5.7zM250.6 536.9h5.7v2.1h-5.7zM257.4 515.3h5.7v2.1h-5.7zM257.4 519.45h5.7v2.1h-5.7zM257.4 523.6h5.7v2.1h-5.7zM257.4 528.6h5.7v2.1h-5.7zM257.4 532.75h5.7v2.1h-5.7zM257.4 536.9h5.7v2.1h-5.7zM266.7 515.3h5.7v2.1h-5.7zM266.7 519.45h5.7v2.1h-5.7zM266.7 523.6h5.7v2.1h-5.7zM266.7 528.6h5.7v2.1h-5.7zM266.7 532.75h5.7v2.1h-5.7zM266.7 536.9h5.7v2.1h-5.7zM274.2 515.3h5.7v2.1h-5.7zM274.2 519.45h5.7v2.1h-5.7zM274.2 523.6h5.7v2.1h-5.7zM274.2 528.6h5.7v2.1h-5.7zM274.2 532.75h5.7v2.1h-5.7zM274.2 536.9h5.7v2.1h-5.7zM281.1 515.3h5.7v2.1h-5.7zM281.1 519.45h5.7v2.1h-5.7zM281.1 523.6h5.7v2.1h-5.7zM281.1 528.6h5.7v2.1h-5.7zM281.1 532.75h5.7v2.1h-5.7zM281.1 536.9h5.7v2.1h-5.7zM290.4 515.3h5.7v2.1h-5.7zM290.4 519.45h5.7v2.1h-5.7zM290.4 523.6h5.7v2.1h-5.7zM290.4 528.6h5.7v2.1h-5.7zM290.4 532.75h5.7v2.1h-5.7zM290.4 536.9h5.7v2.1h-5.7zM297.9 515.3h5.7v2.1h-5.7zM297.9 519.45h5.7v2.1h-5.7zM297.9 523.6h5.7v2.1h-5.7zM297.9 528.6h5.7v2.1h-5.7zM297.9 532.75h5.7v2.1h-5.7zM297.9 536.9h5.7v2.1h-5.7zM305 515.3h5.7v2.1h-5.7zM305 519.45h5.7v2.1h-5.7zM305 523.6h5.7v2.1h-5.7zM305 528.6h5.7v2.1h-5.7zM305 532.75h5.7v2.1h-5.7zM305 536.9h5.7v2.1h-5.7zM314 515.3h5.7v2.1h-5.7zM314 519.45h5.7v2.1h-5.7zM314 523.6h5.7v2.1h-5.7zM314 528.6h5.7v2.1h-5.7zM314 532.75h5.7v2.1h-5.7zM314 536.9h5.7v2.1h-5.7zM321.5 515.3h5.7v2.1h-5.7zM321.5 519.45h5.7v2.1h-5.7zM321.5 523.6h5.7v2.1h-5.7zM321.5 528.6h5.7v2.1h-5.7zM321.5 532.75h5.7v2.1h-5.7zM321.5 536.9h5.7v2.1h-5.7zM328.6 515.3h5.7v2.1h-5.7zM328.6 519.45h5.7v2.1h-5.7zM328.6 523.6h5.7v2.1h-5.7zM328.6 528.6h5.7v2.1h-5.7zM328.6 532.75h5.7v2.1h-5.7zM328.6 536.9h5.7v2.1h-5.7z" fill="#7e7e7e" stroke="#a2a2a2" stroke-width="0.5"/><path d="M210.4 577.1h5.7v2.1h-5.7zM210.4 581.2h5.7v2.1h-5.7zM210.4 585.3h5.7v2.1h-5.7zM210.4 591h5.7v2.1h-5.7zM210.4 595.1h5.7v2.1h-5.7zM210.4 599.2h5.7v2.1h-5.7zM219.4 577.1h5.7v2.1h-5.7zM219.4 581.2h5.7v2.1h-5.7zM219.4 585.3h5.7v2.1h-5.7zM219.4 591h5.7v2.1h-5.7zM219.4 595.1h5.7v2.1h-5.7zM219.4 599.2h5.7v2.1h-5.7zM226.9 577.1h5.7v2.1h-5.7zM226.9 581.2h5.7v2.1h-5.7zM226.9 585.3h5.7v2.1h-5.7zM226.9 591h5.7v2.1h-5.7zM226.9 595.1h5.7v2.1h-5.7zM226.9 599.2h5.7v2.1h-5.7zM234 577.1h5.7v2.1h-5.7zM234 581.2h5.7v2.1h-5.7zM234 585.3h5.7v2.1h-5.7zM234 591h5.7v2.1h-5.7zM234 595.1h5.7v2.1h-5.7zM234 599.2h5.7v2.1h-5.7zM243 577.1h5.7v2.1h-5.7zM243 581.2h5.7v2.1h-5.7zM243 585.3h5.7v2.1h-5.7zM243 591h5.7v2.1h-5.7zM243 595.1h5.7v2.1h-5.7zM243 599.2h5.7v2.1h-5.7zM250.6 577.1h5.7v2.1h-5.7zM250.6 581.2h5.7v2.1h-5.7zM250.6 585.3h5.7v2.1h-5.7zM250.6 591h5.7v2.1h-5.7zM250.6 595.1h5.7v2.1h-5.7zM250.6 599.2h5.7v2.1h-5.7zM257.4 577.1h5.7v2.1h-5.7zM257.4 581.2h5.7v2.1h-5.7zM257.4 585.3h5.7v2.1h-5.7zM257.4 591h5.7v2.1h-5.7zM257.4 595.1h5.7v2.1h-5.7zM257.4 599.2h5.7v2.1h-5.7zM266.7 577.1h5.7v2.1h-5.7zM266.7 581.2h5.7v2.1h-5.7zM266.7 585.3h5.7v2.1h-5.7zM266.7 591h5.7v2.1h-5.7zM266.7 595.1h5.7v2.1h-5.7zM266.7 599.2h5.7v2.1h-5.7zM274.2 577.1h5.7v2.1h-5.7zM274.2 581.2h5.7v2.1h-5.7zM274.2 585.3h5.7v2.1h-5.7zM274.2 591h5.7v2.1h-5.7zM274.2 595.1h5.7v2.1h-5.7zM274.2 599.2h5.7v2.1h-5.7zM281.1 577.1h5.7v2.1h-5.7zM281.1 581.2h5.7v2.1h-5.7zM281.1 585.3h5.7v2.1h-5.7zM281.1 591h5.7v2.1h-5.7zM281.1 595.1h5.7v2.1h-5.7zM281.1 599.2h5.7v2.1h-5.7zM290.4 577.1h5.7v2.1h-5.7zM290.4 581.2h5.7v2.1h-5.7zM290.4 585.3h5.7v2.1h-5.7zM290.4 591h5.7v2.1h-5.7zM290.4 595.1h5.7v2.1h-5.7zM290.4 599.2h5.7v2.1h-5.7zM297.9 577.1h5.7v2.1h-5.7zM297.9 581.2h5.7v2.1h-5.7zM297.9 585.3h5.7v2.1h-5.7zM297.9 591h5.7v2.1h-5.7zM297.9 595.1h5.7v2.1h-5.7zM297.9 599.2h5.7v2.1h-5.7zM305 577.1h5.7v2.1h-5.7zM305 581.2h5.7v2.1h-5.7zM305 585.3h5.7v2.1h-5.7zM305 591h5.7v2.1h-5.7zM305 595.1h5.7v2.1h-5.7zM305 599.2h5.7v2.1h-5.7zM314 577.1h5.7v2.1h-5.7zM314 581.2h5.7v2.1h-5.7zM314 585.3h5.7v2.1h-5.7zM314 591h5.7v2.1h-5.7zM314 595.1h5.7v2.1h-5.7zM314 599.2h5.7v2.1h-5.7zM321.5 577.1h5.7v2.1h-5.7zM321.5 581.2h5.7v2.1h-5.7zM321.5 585.3h5.7v2.1h-5.7zM321.5 591h5.7v2.1h-5.7zM321.5 595.1h5.7v2.1h-5.7zM321.5 599.2h5.7v2.1h-5.7zM328.6 577.1h5.7v2.1h-5.7zM328.6 581.2h5.7v2.1h-5.7zM328.6 585.3h5.7v2.1h-5.7zM328.6 591h5.7v2.1h-5.7zM328.6 595.1h5.7v2.1h-5.7zM328.6 599.2h5.7v2.1h-5.7z" fill="#7e7e7e" stroke="#a2a2a2" stroke-width="0.5"/><circle cx="217.7" cy="557.8" r="9.7" fill="#3e4042"/><circle cx="217.7" cy="557.8" r="5.9" fill="none" stroke="#6f7276" stroke-width="6.4" stroke-dasharray="3.55 1.08"/><circle cx="217.7" cy="557.8" r="2.1" fill="#e4e4e4"/><circle cx="239.6" cy="557.8" r="9.7" fill="#3e4042"/><circle cx="239.6" cy="557.8" r="5.9" fill="none" stroke="#6f7276" stroke-width="6.4" stroke-dasharray="3.55 1.08"/><circle cx="239.6" cy="557.8" r="2.1" fill="#e4e4e4"/><circle cx="261.8" cy="557.8" r="9.7" fill="#3e4042"/><circle cx="261.8" cy="557.8" r="5.9" fill="none" stroke="#6f7276" stroke-width="6.4" stroke-dasharray="3.55 1.08"/><circle cx="261.8" cy="557.8" r="2.1" fill="#e4e4e4"/><circle cx="283.7" cy="557.8" r="9.7" fill="#3e4042"/><circle cx="283.7" cy="557.8" r="5.9" fill="none" stroke="#6f7276" stroke-width="6.4" stroke-dasharray="3.55 1.08"/><circle cx="283.7" cy="557.8" r="2.1" fill="#e4e4e4"/><circle cx="305.6" cy="557.8" r="9.7" fill="#3e4042"/><circle cx="305.6" cy="557.8" r="5.9" fill="none" stroke="#6f7276" stroke-width="6.4" stroke-dasharray="3.55 1.08"/><circle cx="305.6" cy="557.8" r="2.1" fill="#e4e4e4"/><circle cx="327.8" cy="557.8" r="9.7" fill="#3e4042"/><circle cx="327.8" cy="557.8" r="5.9" fill="none" stroke="#6f7276" stroke-width="6.4" stroke-dasharray="3.55 1.08"/><circle cx="327.8" cy="557.8" r="2.1" fill="#e4e4e4"/><rect x="502.3" y="480.4" width="145.7" height="14.4" fill="#d9d9d9" /><rect x="502.3" y="480.1" width="145.7" height="1.1" fill="#444" /><rect x="502.3" y="625.5" width="145.7" height="14.7" fill="#d9d9d9" /><rect x="502.3" y="639.4" width="145.7" height="1.2" fill="#444" /><path d="M487.8 498.2 H502.3 V622.3 H487.8 Q491.4 560 487.8 498.2Z" fill="url(#sideL)"/><path d="M648 498.2 H662 Q658.4 560 662 622.3 H648Z" fill="url(#sideR)"/><rect x="488.5" y="543.4" width="173" height="5.8" fill="#e9e9e9" /><rect x="488.5" y="556.7" width="173" height="6.9" fill="#e9e9e9" /><rect x="488.5" y="571.8" width="173" height="6" fill="#e9e9e9" /><path d="M488.5 513.3H661.5" stroke="#c9c9c9" stroke-width="0.8"/><path d="M488.5 543.4H661.5" stroke="#c9c9c9" stroke-width="0.8"/><path d="M488.5 549.2H661.5" stroke="#c9c9c9" stroke-width="0.8"/><path d="M488.5 556.7H661.5" stroke="#c9c9c9" stroke-width="0.8"/><path d="M488.5 563.6H661.5" stroke="#c9c9c9" stroke-width="0.8"/><path d="M488.5 571.8H661.5" stroke="#c9c9c9" stroke-width="0.8"/><path d="M488.5 577.8H661.5" stroke="#c9c9c9" stroke-width="0.8"/><path d="M488.5 607.7H661.5" stroke="#c9c9c9" stroke-width="0.8"/><path d="M487.8 498.2 H502.3 V622.3 H487.8 Q491.4 560 487.8 498.2Z" fill="url(#sideL)" opacity=".75"/><path d="M648 498.2 H662 Q658.4 560 662 622.3 H648Z" fill="url(#sideR)" opacity=".75"/><path d="M687.7 492.2 H748.1 L741.5 549.2 H694.1Z" fill="#c4c4c4" filter="url(#b6)"/><path d="M687.7 492.2 H748.1 L741.5 549.2 H694.1Z" fill="#6e6e6e" filter="url(#b2)" transform="translate(0.6 0.6)"/><path d="M687.7 492.2 H748.1 L741.5 549.2 H694.1Z" fill="#f8f8f8" stroke="#e2e2e2" stroke-width="0.5"/><rect x="675.8" y="576.5" width="84.2" height="85.7" rx="5" fill="#fbfbfb" stroke="#000" stroke-width="5"/><rect x="680.4" y="580.4" width="4.7" height="76.4" fill="#a8a8a8" filter="url(#b05)"/><rect x="687.3" y="580.4" width="4.7" height="76.4" fill="#c6c6c6" filter="url(#b05)"/><rect x="693.7" y="580.4" width="4.3" height="76.4" fill="#bcbcbc" filter="url(#b05)"/><rect x="699.7" y="580.4" width="4.8" height="76.4" fill="#c2c2c2" filter="url(#b05)"/><rect x="717.4" y="601" width="4.7" height="55.8" fill="#b0b0b0" filter="url(#b05)"/><rect x="724.2" y="580" width="6.5" height="57" fill="#b8b8b8" filter="url(#b05)"/><rect x="734.1" y="580" width="3.1" height="48.8" fill="#cdcdcd" filter="url(#b05)"/><rect x="750.7" y="581.5" width="5.4" height="57" fill="#bcbcbc" filter="url(#b05)"/><rect x="706.2" y="584" width="8.6" height="72.8" fill="url(#dbar)" /><rect x="740" y="579" width="9" height="80.6" fill="url(#dbar2)" /><circle cx="865.1" cy="643.7" r="28.4" fill="#151515"/><circle cx="865.1" cy="643.7" r="25.6" fill="#8f8b88"/><circle cx="865.1" cy="643.7" r="25.6" fill="url(#ledp)"/><circle cx="865.1" cy="646" r="21" fill="url(#ledo)"/><circle cx="865.1" cy="643.7" r="25.6" fill="none" stroke="#5a5856" stroke-width="1.2" opacity=".6"/><ellipse cx="863.9" cy="703.1" rx="30.2" ry="29.6" fill="url(#hl2)"/><ellipse cx="863.9" cy="703.1" rx="29.6" ry="29" fill="none" stroke="#a09a8a" stroke-width="1.1"/><path d="M853 696 Q862 686 877 691 Q869 692 866 698 Q874 696 879 702 Q874 700 866 703 Q858 706 853 704Z" fill="#3d302b" opacity=".75" filter="url(#b1)"/><path d="M852 708 Q862 704 878 706 Q874 716 864 717 Q856 716 852 708Z" fill="#a89c94" opacity=".6" filter="url(#b1)"/><path d="M842 690 Q850 678 866 677" stroke="#fff" stroke-width="3" fill="none" opacity=".8" filter="url(#b1)"/><ellipse cx="862.9" cy="764.2" rx="30.6" ry="30.3" fill="url(#hl3)"/><ellipse cx="862.9" cy="764.2" rx="29.8" ry="29.5" fill="none" stroke="#9c9686" stroke-width="1.3"/><path d="M846 748 Q860 738 878 746 Q884 752 885 760 Q870 748 850 756Z" fill="#f2f2f2" opacity=".75" filter="url(#b15)"/><rect x="853" y="765" width="19" height="15" fill="none" stroke="#cfc8c0" stroke-width="1.2" filter="url(#b05)"/><circle cx="860.5" cy="763.5" r="3.6" fill="#6e625c" stroke="#c4bcb4" stroke-width="0.8"/><path d="M846 776 Q852 788 866 788 Q878 786 882 774" stroke="#8a6a5a" stroke-width="3" fill="none" opacity=".5" filter="url(#b15)"/><rect x="542" y="720" width="69.8" height="75" fill="#2d7ab6" /><rect x="543" y="721" width="38.8" height="73.5" rx="15" fill="url(#or1)"/><rect x="553" y="727" width="25" height="15" rx="4" fill="#ffc524" opacity=".85" filter="url(#b2)"/><path d="M548 760 H577 M548 768 H577 M549 776 H576" stroke="#d86a08" stroke-width="1" opacity=".6"/><circle cx="563" cy="724.5" r="2.2" fill="#d07818" stroke="#a85a08" stroke-width="0.6"/><circle cx="560.5" cy="790.5" r="2.2" fill="#d07818" stroke="#a85a08" stroke-width="0.6"/><rect x="583.4" y="719.6" width="27.3" height="75" rx="2" fill="#e76f1b" stroke="#b8500c" stroke-width="1"/><rect x="589.5" y="749" width="14" height="17" fill="#ff7d12" /><rect x="607" y="722" width="2.5" height="70" fill="#f4a030" opacity=".8"/><circle cx="596" cy="723.5" r="3" fill="#8a7a62" stroke="#4a3a2a" stroke-width="0.8"/><circle cx="596" cy="790" r="3" fill="#8a7a62" stroke="#4a3a2a" stroke-width="0.8"/><rect x="613" y="775.7" width="30.5" height="19.3" fill="#8f9094" /><rect x="614" y="777" width="29" height="18" rx="5" fill="#3e4044"/><rect x="618" y="779.5" width="21" height="12" rx="4" fill="#74777c" filter="url(#b1)"/><rect x="659.1" y="775.3" width="36.7" height="19.7" fill="#b4ad45" /><rect x="661.5" y="777.3" width="32" height="16" rx="5" fill="#40261a"/><rect x="663.5" y="778.8" width="28" height="12.6" rx="4.5" fill="#c6182a"/><circle cx="650.5" cy="747.6" r="26.6" fill="url(#amber)"/><circle cx="650.5" cy="747.6" r="13" fill="none" stroke="#9a520a" stroke-width="1.2" opacity=".8"/><circle cx="650.5" cy="747.6" r="18.5" fill="none" stroke="#c97d22" stroke-width="5" stroke-dasharray="5.5 4.2" opacity=".45"/><circle cx="704.8" cy="748.1" r="26.3" fill="url(#clear)"/><circle cx="704.8" cy="748.1" r="12.5" fill="#b9b9b9" stroke="#8c8c8c" stroke-width="1"/><circle cx="704.8" cy="748.1" r="18" fill="none" stroke="#e6e6e0" stroke-width="4.5" stroke-dasharray="4.4 5" opacity=".7"/><circle cx="704.8" cy="748.1" r="6.5" fill="none" stroke="#ecebe0" stroke-width="2.4" stroke-dasharray="2.4 2.7" opacity=".8"/><circle cx="757.1" cy="746.7" r="24.7" fill="url(#red1)"/><circle cx="757.1" cy="746.7" r="12" fill="#cc1a22" stroke="#8a0c12" stroke-width="1.1"/><circle cx="757.1" cy="746.7" r="17.5" fill="none" stroke="#e03038" stroke-width="4.5" stroke-dasharray="5 4.2" opacity=".5"/><path d="M748 742H766M748 747H766M749 752H765" stroke="#8a0e14" stroke-width="1.6" opacity=".7"/><circle cx="808.2" cy="746.4" r="25" fill="url(#red2)"/><circle cx="816.0" cy="748.8" r="3.3" fill="#7a0c14"/><circle cx="810.0" cy="754.4" r="3.3" fill="#7a0c14"/><circle cx="802.2" cy="752.0" r="3.3" fill="#7a0c14"/><circle cx="800.4" cy="744.0" r="3.3" fill="#7a0c14"/><circle cx="806.4" cy="738.4" r="3.3" fill="#7a0c14"/><circle cx="814.2" cy="740.8" r="3.3" fill="#7a0c14"/><circle cx="808.2" cy="746.4" r="3.3" fill="#7a0c14"/><path d="M700.5 793.6 Q716 778 736 773.6 L831.6 775.6 Q822 788 807.4 793.8 Z" fill="url(#lens)" stroke="#37332c" stroke-width="1"/><path d="M742 776 L740 788 M752 776 L756 788 M766 776 L764 789 M778 777 L784 789 M792 777 L790 789 M806 777 L800 788" stroke="#d8d4cc" stroke-width="1.4" opacity=".55" filter="url(#b05)"/><path d="M706 792 Q760 786 812 790" stroke="#c8c2b4" stroke-width="2" fill="none" opacity=".6" filter="url(#b05)"/><path d="M738 776 L760 776 L756 784 L736 785Z M770 777 L800 777 L796 786 L768 786Z" fill="#2c2924" opacity=".55" filter="url(#b05)"/></svg></div><div style="left:189.8px;top:84px;width:1.2px;height:719.5px;background:#2f9ea4"></div><div style="left:190px;top:91px;width:1.2px;height:704px;background:#5fdfe3"></div><!-- s_right --><div style="left:1049px;top:54px;width:3px;height:783px;background:#2e2e2e"></div><div style="left:1052px;top:54px;width:226px;height:9px;background:#383838;border-bottom:1px solid #2c2c2c"></div><svg style="left:1072.5px;top:56.5px;" width="7" height="4.6" viewBox="0 0 7 4.6"><path d="M2.8 0 L0 2.3 L2.8 4.6Z M6.4 0 L3.6 2.3 L6.4 4.6Z" fill="#d8d8d8"/></svg><svg style="left:1268px;top:57px;" width="7" height="4.6" viewBox="0 0 7 4.6"><path d="M0 0 L2.8 2.3 L0 4.6Z M3.6 0 L6.4 2.3 L3.6 4.6Z" fill="#d8d8d8"/></svg><div style="left:1052px;top:63px;width:32px;height:774px;background:#515151;border-right:2px solid #2e2e2e"></div><div class="cgrp" style="left:1052px;top:63px;width:31px;height:33px;"></div><div style="left:1060px;top:66.5px;width:14px;height:2px;background:repeating-linear-gradient(90deg,#303030 0,#303030 1px,#5e5e5e 1px,#5e5e5e 2px)"></div><div class="cgrp" style="left:1052px;top:96.5px;width:31px;height:32.5px;"></div><div style="left:1060px;top:100px;width:14px;height:2px;background:repeating-linear-gradient(90deg,#303030 0,#303030 1px,#5e5e5e 1px,#5e5e5e 2px)"></div><div class="cgrp" style="left:1052px;top:129.5px;width:31px;height:56px;"></div><div style="left:1060px;top:133px;width:14px;height:2px;background:repeating-linear-gradient(90deg,#303030 0,#303030 1px,#5e5e5e 1px,#5e5e5e 2px)"></div><svg style="left:1061px;top:75px;" width="14" height="14" viewBox="0 0 14 14"><path d="M1 1.5h3v3h-3z M1 6h3v3h-3z" fill="none" stroke="#d4d4d4" stroke-width="0.9"/><path d="M0.6 10.4h4v3.2h-4z" fill="#d4d4d4"/><path d="M8.4 1.6 C12.8 3.4 12.8 8.8 8.2 11.2" fill="none" stroke="#d4d4d4" stroke-width="1.5"/><path d="M6.6 1.2 L10.4 0.4 L9.4 4Z" fill="#d4d4d4"/></svg><svg style="left:1060px;top:108px;" width="15" height="13" viewBox="0 0 15 13"><path d="M4.6 0.4 L8.6 2.2 V7 L4.6 9 L0.6 7 V2.2Z" fill="#9a9a9a" stroke="#d4d4d4" stroke-width="0.9"/><path d="M0.6 2.2 L4.6 4.2 L8.6 2.2 M4.6 4.2 V9" stroke="#d4d4d4" stroke-width="0.8" fill="none"/><path d="M10.4 1h3.4v2.4h-3.4z M10.4 4.8h3.4v2.4h-3.4z" fill="#d4d4d4"/><path d="M0.6 10.2 H13.8 V12.6 H0.6Z" fill="#d4d4d4"/><path d="M10.6 10.8 h2.6 l-1.3 1.5z" fill="#444"/></svg><svg style="left:1060px;top:141px;" width="14" height="16" viewBox="0 0 14 16"><path d="M3.4 8.4 H10.8 V15 H3.4Z" fill="#d4d4d4"/><path d="M4.8 8 L3 1.6 M7.1 8 V0.6 M9.4 8 L11.4 1.6" stroke="#d4d4d4" stroke-width="1.9" stroke-linecap="round"/><path d="M4.8 8 L3.8 4.5 M7.1 8 V4 M9.4 8 L10.5 4.5" stroke="#8a8a8a" stroke-width="1" /></svg><svg style="left:1060px;top:164px;" width="16" height="15" viewBox="0 0 16 15"><path d="M0.4 3.4 H15 M0.4 10.4 H15" stroke="#d4d4d4" stroke-width="1.4"/><ellipse cx="5" cy="3.4" rx="2.6" ry="2" fill="#d4d4d4"/><path d="M11.4 5.6 C13.4 7.6 13.8 11 12 14 C9.6 12 9.4 8 11.4 5.6Z" fill="#d4d4d4"/></svg><div class="ptabrow" style="left:1084px;top:63px;width:193px;height:14px;top:63px"></div><div class="ptab" style="left:1084px;top:63px;width:31.5px;height:14px;"></div><div class="ptabi" style="left:1115.5px;top:63px;width:30.5px;height:14px;"></div><div class="t" style="left:1090.2px;top:64px;font-size:11px;line-height:13px;transform:scaleX(0.8909);transform-origin:0 0;">颜色</div><div class="t" style="left:1121px;top:64px;font-size:11px;line-height:13px;transform:scaleX(0.8909);transform-origin:0 0;color:#a6a6a6">色板</div><svg style="left:1262.4px;top:68.3px;" width="12" height="6" viewBox="0 0 12 6"><path d="M0 0.5 H4.4 L2.2 3.2Z" fill="#d8d8d8"/><path d="M5.4 0.5H12M5.4 2.8H12M5.4 5.1H12" stroke="#d8d8d8" stroke-width="1.1"/></svg><div class="pbody" style="left:1084px;top:77px;width:193px;height:90.5px;"></div><div style="left:1096.9px;top:94.6px;width:14.5px;height:15.3px;background:#000;border:1px solid #e8e8e8;box-shadow:0 0 0 1px #3a3a3a"></div><div style="left:1087.5px;top:85.4px;width:16.6px;height:17px;background:#fc0b16;border:1px solid #8e8e8e;box-shadow:inset 0 0 0 1px #3a3a3a"></div><div class="t" style="left:1118.5px;top:87.1px;font-size:10px;line-height:11px;color:#e0e0e0">R</div><div class="t" style="left:1118.5px;top:107.1px;font-size:10px;line-height:11px;color:#e0e0e0">G</div><div class="t" style="left:1118.5px;top:127.1px;font-size:10px;line-height:11px;color:#e0e0e0">B</div><div style="left:1131.2px;top:88px;width:65.3px;height:4.6px;background:linear-gradient(90deg,#000b16,#ff0b16);border:1px solid #6e6e6e;border-top-color:#3e3e3e"></div><div style="left:1131.2px;top:108.2px;width:65.3px;height:4.6px;background:linear-gradient(90deg,#fc0016,#fcff16);border:1px solid #6e6e6e;border-top-color:#3e3e3e"></div><div style="left:1131.2px;top:128.3px;width:65.3px;height:4.6px;background:linear-gradient(90deg,#fc0b00,#fc0bff);border:1px solid #6e6e6e;border-top-color:#3e3e3e"></div><svg style="left:1191.3px;top:93.6px;" width="8.4" height="6.6" viewBox="0 0 8.4 6.6"><defs><linearGradient id="ts" x1="0" y1="0" x2="0" y2="1"><stop offset="0" stop-color="#f4f4f4"/><stop offset="1" stop-color="#8e8e8e"/></linearGradient></defs><path d="M4.2 0.2 L8 3.6 V6.3 H0.4 V3.6Z" fill="url(#ts)" stroke="#3c3c3c" stroke-width="0.6"/></svg><svg style="left:1130.4px;top:113.8px;" width="8.4" height="6.6" viewBox="0 0 8.4 6.6"><defs><linearGradient id="ts" x1="0" y1="0" x2="0" y2="1"><stop offset="0" stop-color="#f4f4f4"/><stop offset="1" stop-color="#8e8e8e"/></linearGradient></defs><path d="M4.2 0.2 L8 3.6 V6.3 H0.4 V3.6Z" fill="url(#ts)" stroke="#3c3c3c" stroke-width="0.6"/></svg><svg style="left:1133.4px;top:134px;" width="8.4" height="6.6" viewBox="0 0 8.4 6.6"><defs><linearGradient id="ts" x1="0" y1="0" x2="0" y2="1"><stop offset="0" stop-color="#f4f4f4"/><stop offset="1" stop-color="#8e8e8e"/></linearGradient></defs><path d="M4.2 0.2 L8 3.6 V6.3 H0.4 V3.6Z" fill="url(#ts)" stroke="#3c3c3c" stroke-width="0.6"/></svg><div class="vbox" style="left:1201.1px;top:86.1px;width:40.8px;height:14.8px;"></div><div class="t" style="left:1203.8px;top:88.5px;font-size:10px;line-height:12px;color:#ececec;letter-spacing:-0.5px">252</div><div class="vbox" style="left:1201.1px;top:106.3px;width:40.8px;height:14.8px;"></div><div class="t" style="left:1203.8px;top:108.7px;font-size:10px;line-height:12px;color:#ececec;letter-spacing:-0.5px">11</div><div class="vbox" style="left:1201.1px;top:126.5px;width:40.8px;height:14.8px;"></div><div class="t" style="left:1203.8px;top:128.9px;font-size:10px;line-height:12px;color:#ececec;letter-spacing:-0.5px">22</div><svg style="left:1092.5px;top:129.5px;" width="10.6" height="10.2" viewBox="0 0 10.6 10.2"><path d="M5.3 0.4 L10.3 9.8 H0.3Z" fill="#d6d6d6" stroke="#8a8a8a" stroke-width="0.5"/><path d="M5.3 3.4 V6.8 M5.3 7.8 V8.9" stroke="#333" stroke-width="1.4"/></svg><div style="left:1105.8px;top:130px;width:9.4px;height:9.8px;background:#e82222;border:1px solid #f0f0f0"></div><div style="left:1089.4px;top:150.7px;width:153px;height:12.3px;background:linear-gradient(rgba(255,255,255,1) 0%,rgba(255,255,255,0) 40%,rgba(0,0,0,0) 46%,rgba(0,0,0,1) 100%),linear-gradient(90deg,#f00 0%,#ff0 16%,#0d0 33%,#0cf 49%,#00e 65%,#f0d 81%,#f00 98%)"></div><div style="left:1242.3px;top:150.7px;width:7.1px;height:6.2px;background:#fff"></div><div style="left:1242.3px;top:156.9px;width:7.1px;height:6.1px;background:#000"></div><div style="left:1084px;top:167.5px;width:193px;height:2px;background:#2e2e2e"></div><div class="ptabrow" style="left:1084px;top:169.5px;width:193px;height:14px;"></div><div class="ptab" style="left:1084px;top:169.5px;width:31.5px;height:14px;"></div><div class="ptabi" style="left:1115.5px;top:169.5px;width:32px;height:14px;"></div><div class="t" style="left:1090.2px;top:170.5px;font-size:11px;line-height:13px;transform:scaleX(0.8909);transform-origin:0 0;">调整</div><div class="t" style="left:1121.5px;top:170.5px;font-size:11px;line-height:13px;transform:scaleX(0.8909);transform-origin:0 0;color:#a6a6a6">样式</div><svg style="left:1262.4px;top:174.8px;" width="12" height="6" viewBox="0 0 12 6"><path d="M0 0.5 H4.4 L2.2 3.2Z" fill="#d8d8d8"/><path d="M5.4 0.5H12M5.4 2.8H12M5.4 5.1H12" stroke="#d8d8d8" stroke-width="1.1"/></svg><div class="pbody" style="left:1084px;top:183.5px;width:193px;height:90px;"></div><div class="t" style="left:1092px;top:188px;font-size:11px;line-height:13px;transform:scaleX(0.8477);transform-origin:0 0;">添加调整</div><svg style="left:0;top:0;opacity:.86" width="1281" height="280" viewBox="0 0 1281 280"><defs><linearGradient id="ag" x1="0" y1="0" x2="1" y2="0"><stop offset="0" stop-color="#3a3a3a"/><stop offset="1" stop-color="#e0e0e0"/></linearGradient><linearGradient id="av" x1="0" y1="0" x2="0" y2="1"><stop offset="0" stop-color="#e4e4e4"/><stop offset="1" stop-color="#8c8c8c"/></linearGradient><linearGradient id="ad" x1="0" y1="0" x2="1" y2="1"><stop offset="0" stop-color="#e0e0e0"/><stop offset=".5" stop-color="#777"/><stop offset="1" stop-color="#d0d0d0"/></linearGradient></defs><circle cx="1129.2" cy="214.5" r="3.3" fill="#5a5a5a" stroke="#d4d4d4" stroke-width="1.2"/><path d="M1129.2 211.2 a3.3 3.3 0 0 1 0 6.6z" fill="#d4d4d4"/><path d="M1134.2 214.5 L1136.0 214.5" stroke="#d4d4d4" stroke-width="1.2"/><path d="M1132.7 218.0 L1134.0 219.3" stroke="#d4d4d4" stroke-width="1.2"/><path d="M1129.2 219.5 L1129.2 221.3" stroke="#d4d4d4" stroke-width="1.2"/><path d="M1125.7 218.0 L1124.4 219.3" stroke="#d4d4d4" stroke-width="1.2"/><path d="M1124.2 214.5 L1122.4 214.5" stroke="#d4d4d4" stroke-width="1.2"/><path d="M1125.7 211.0 L1124.4 209.7" stroke="#d4d4d4" stroke-width="1.2"/><path d="M1129.2 209.5 L1129.2 207.7" stroke="#d4d4d4" stroke-width="1.2"/><path d="M1132.7 211.0 L1134.0 209.7" stroke="#d4d4d4" stroke-width="1.2"/><path d="M1142 218 V214 l1.5 -2 l1.5 3 l1.5 -5 l1.5 4 l1.5 -5.4 l1.5 5 l1.5 -3 l1.5 3.4 l1.5 -2 V218Z" fill="#d4d4d4"/><path d="M1141.7 219.2H1156.8" stroke="#d4d4d4" stroke-width="1.2"/><rect x="1162.5" y="209.2" width="12" height="10.3" fill="#666" stroke="#cfcfcf" stroke-width="1"/><path d="M1166.3 209V220M1170.6 209V220M1162 212.5H1175M1162 216.3H1175" stroke="#9c9c9c" stroke-width="0.6"/><path d="M1162.6 219.4 C1169 219 1168 209.6 1174.4 209.3" fill="none" stroke="#f0f0f0" stroke-width="1.2"/><rect x="1181.3" y="209.2" width="12.4" height="10.3" fill="#5a5a5a" stroke="#cfcfcf" stroke-width="1"/><path d="M1181.6 219.4 L1193.6 209.3 V219.4Z" fill="#cfcfcf"/><path d="M1183.5 212.4h3.4M1185.2 210.7v3.4M1188.6 216.6h3" stroke="#eee" stroke-width="0.9"/><path d="M1200.5 208.5 H1213.4 L1207 220.5Z" fill="url(#av)" stroke="#cfcfcf" stroke-width="0.8"/><path d="M1203.6 210.4 H1210.4 L1207 216.6Z" fill="#6a6a6a"/><rect x="1114" y="231.2" width="12.5" height="10.3" fill="url(#ag)" stroke="#cfcfcf" stroke-width="1"/><path d="M1114.4 231.6h11.8v3.6h-11.8z" fill="#555"/><path d="M1116.4 231.6v3.6M1119 231.6v3.6M1121.6 231.6v3.6M1124.2 231.6v3.6" stroke="#d8d8d8" stroke-width="1"/><path d="M1139 231 V241 M1133.4 233.4 H1144.6 M1136 241.4 H1142" stroke="#d4d4d4" stroke-width="1.2"/><path d="M1133.6 233.6 l-1.8 4.6 h3.8z M1144.4 233.6 l-1.8 4.6 h3.8z" fill="none" stroke="#d4d4d4" stroke-width="0.8"/><path d="M1131.4 238.4 a2.4 2 0 0 0 4.6 0z M1142.2 238.4 a2.4 2 0 0 0 4.6 0z" fill="#d4d4d4"/><circle cx="1139" cy="231.4" r="1.2" fill="#d4d4d4"/><rect x="1152.5" y="231.2" width="12.3" height="10.3" fill="#cfcfcf" stroke="#cfcfcf" stroke-width="1"/><rect x="1153" y="231.7" width="5.4" height="9.3" fill="#4e4e4e"/><rect x="1171.3" y="232.2" width="9.6" height="6.6" rx="1" fill="#707070" stroke="#d4d4d4" stroke-width="1"/><rect x="1173.5" y="230.8" width="3.4" height="1.6" fill="#d4d4d4"/><circle cx="1176" cy="235.5" r="1.9" fill="none" stroke="#d4d4d4" stroke-width="0.9"/><circle cx="1180.6" cy="238.4" r="3.7" fill="#8a8a8a" stroke="#d4d4d4" stroke-width="1"/><circle cx="1197" cy="234.3" r="3.5" fill="#e0e0e0"/><circle cx="1194.4" cy="238.6" r="3.5" fill="#c4c4c4"/><circle cx="1199.6" cy="238.6" r="3.5" fill="#c4c4c4"/><path d="M1195.4 236.6 h3.2 l-1.6 3.4z" fill="#555"/><rect x="1210.5" y="231.2" width="12" height="10.3" fill="#5c5c5c" stroke="#cfcfcf" stroke-width="1"/><path d="M1214.3 231V242M1218.7 231V242M1210 234.5H1223M1210 238.3H1223" stroke="#d4d4d4" stroke-width="1"/><rect x="1123.4" y="253.4" width="12.3" height="9.3" fill="#666" stroke="#cfcfcf" stroke-width="1"/><ellipse cx="1129.5" cy="258" rx="4.2" ry="2.5" fill="#dcdcdc" transform="rotate(-32 1129.5 258)"/><path d="M1123.8 262.4 L1135.4 253.8" stroke="#555" stroke-width="0.8"/><rect x="1142.9" y="253.4" width="12.4" height="9.3" fill="#777" stroke="#cfcfcf" stroke-width="1"/><path d="M1143.2 262.4 L1155 253.7 M1143.2 258.4 L1150 253.7 M1148.5 262.4 L1155 257.8" stroke="#d4d4d4" stroke-width="1.6" opacity=".8"/><rect x="1162.4" y="253.4" width="12.1" height="9.3" fill="#555" stroke="#cfcfcf" stroke-width="1"/><path d="M1162.7 260.6 l2.4 -1.6 l1.2 0.9 l2.4 -2.9 l1.4 0.8 l2.2 -2.8 l1.6 0.6 V262.4 H1162.7Z" fill="#dcdcdc"/><rect x="1181.3" y="253.4" width="12.4" height="9.3" fill="#c4c4c4" stroke="#cfcfcf" stroke-width="1"/><path d="M1181.6 253.7 L1187.5 258 L1181.6 262.4Z M1193.4 253.7 L1187.5 258 L1193.4 262.4Z" fill="#5a5a5a"/><rect x="1200.8" y="253.4" width="12.2" height="9.3" fill="url(#ag)" stroke="#cfcfcf" stroke-width="1"/></svg><div style="left:1084px;top:273.5px;width:193px;height:2px;background:#2e2e2e"></div><div class="ptabrow" style="left:1084px;top:275.5px;width:193px;height:14.5px;"></div><div class="ptab" style="left:1084px;top:275.5px;width:31.5px;height:14.5px;"></div><div class="ptabi" style="left:1115.5px;top:275.5px;width:31.5px;height:14.5px;"></div><div class="ptabi" style="left:1147px;top:275.5px;width:32.7px;height:14.5px;"></div><div class="t" style="left:1089.8px;top:276.5px;font-size:11px;line-height:13px;transform:scaleX(0.8909);transform-origin:0 0;">图层</div><div class="t" style="left:1121px;top:276.5px;font-size:11px;line-height:13px;transform:scaleX(0.8909);transform-origin:0 0;color:#a6a6a6">通道</div><div class="t" style="left:1153.5px;top:276.5px;font-size:11px;line-height:13px;transform:scaleX(0.8909);transform-origin:0 0;color:#a6a6a6">路径</div><svg style="left:1262.4px;top:280px;" width="12" height="6" viewBox="0 0 12 6"><path d="M0 0.5 H4.4 L2.2 3.2Z" fill="#d8d8d8"/><path d="M5.4 0.5H12M5.4 2.8H12M5.4 5.1H12" stroke="#d8d8d8" stroke-width="1.1"/></svg><div style="left:1084px;top:290px;width:193px;height:547px;background:#535353"></div><div class="dd" style="left:1087.4px;top:292.8px;width:56.3px;height:15.7px;"></div><svg style="left:1092.5px;top:296px;" width="8" height="8.5" viewBox="0 0 8 8.5"><circle cx="4.6" cy="3.4" r="2.7" fill="none" stroke="#dcdcdc" stroke-width="1.1"/><path d="M2.8 5.4 L0.5 8" stroke="#dcdcdc" stroke-width="1.3"/></svg><div class="t" style="left:1105.5px;top:294px;font-size:11px;line-height:13px;transform:scaleX(0.8545);transform-origin:0 0;">类型</div><svg style="left:1136px;top:297.2px;" width="5" height="8" viewBox="0 0 5 8"><path d="M0.2 2.8 L2.5 0.1 L4.8 2.8Z M0.2 4.6 L2.5 7.3 L4.8 4.6Z" fill="#e2e2e2"/></svg><svg style="left:1160.9px;top:296.2px;" width="11.4" height="9" viewBox="0 0 11.4 9"><rect x="0.5" y="0.5" width="10.4" height="8" fill="#5a5a5a" stroke="#d4d4d4" stroke-width="1"/><path d="M1.6 7.4 L4.2 4.2 L6 6 L7.6 4.8 L9.8 7.4Z" fill="#d4d4d4"/><circle cx="7.6" cy="2.8" r="0.9" fill="#d4d4d4"/></svg><svg style="left:1180.6px;top:296px;" width="9.8" height="9.8" viewBox="0 0 9.8 9.8"><circle cx="4.9" cy="4.9" r="4.2" fill="#5a5a5a" stroke="#d4d4d4" stroke-width="1.1"/><path d="M1.9 7.9 A4.2 4.2 0 0 1 7.9 1.9Z" fill="#d4d4d4"/></svg><svg style="left:1199.7px;top:296px;" width="9.4" height="9.2" viewBox="0 0 9.4 9.2"><path d="M0.2 0.2 H9.2 V2.6 H8.5 C8.3 1.4 8 1.1 6.8 1.1 H5.6 V7.6 C5.6 8.2 6 8.4 6.9 8.5 V9.1 H2.5 V8.5 C3.4 8.4 3.8 8.2 3.8 7.6 V1.1 H2.6 C1.4 1.1 1.1 1.4 0.9 2.6 H0.2Z" fill="#d4d4d4"/></svg><svg style="left:1219.4px;top:295.5px;" width="10.2" height="10.2" viewBox="0 0 10.2 10.2"><rect x="1.6" y="1.6" width="7" height="7" fill="none" stroke="#d4d4d4" stroke-width="1"/><path d="M0 0h3v3h-3z M7.2 0h3v3h-3z M0 7.2h3v3h-3z M7.2 7.2h3v3h-3z" fill="#d4d4d4"/></svg><svg style="left:1238.6px;top:295.5px;" width="10" height="10.6" viewBox="0 0 10 10.6"><path d="M3.6 0.5 H7.4 L9.5 2.6 V8.4 H3.6Z" fill="#5e5e5e" stroke="#d4d4d4" stroke-width="1"/><rect x="0.5" y="4.8" width="5" height="5.2" fill="#bdbdbd" stroke="#d4d4d4" stroke-width="0.8"/></svg><div style="left:1266.8px;top:293.8px;width:7px;height:13.2px;background:linear-gradient(#8a8a8a 0,#7a7a7a 45%,#3a3a3a 50%,#3a3a3a 100%);border:1px solid #2c2c2c;border-radius:2px"></div><div style="left:1084px;top:311.5px;width:193px;height:1px;background:#444"></div><div class="dd" style="left:1087.4px;top:315px;width:88.9px;height:16.2px;"></div><div class="t" style="left:1094px;top:317px;font-size:11px;line-height:13px;transform:scaleX(0.8455);transform-origin:0 0;">正常</div><svg style="left:1168px;top:319.3px;" width="5" height="8" viewBox="0 0 5 8"><path d="M0.2 2.8 L2.5 0.1 L4.8 2.8Z M0.2 4.6 L2.5 7.3 L4.8 4.6Z" fill="#e2e2e2"/></svg><div class="t" style="left:1182.8px;top:317px;font-size:11px;line-height:13px;transform:scaleX(0.8819);transform-origin:0 0;">不透明度:</div><div style="left:1228.9px;top:315.8px;width:44px;height:15.2px;background:linear-gradient(#666,#545454);border:1px solid #353535;border-radius:2px;box-shadow:0 1px 0 #5e5e5e"></div><div style="left:1228.9px;top:315.8px;width:28.8px;height:15.2px;background:#3f3f3f;border:1px solid #353535;border-radius:2px 0 0 2px"></div><div class="t" style="left:1231.6px;top:318px;font-size:10px;line-height:12px;color:#ececec;letter-spacing:-0.5px">100%</div><svg style="left:1263px;top:322.6px;" width="5" height="3" viewBox="0 0 5 3"><path d="M0 0H5L2.5 3Z" fill="#e6e6e6"/></svg><div style="left:1228.9px;top:338.9px;width:44px;height:15.2px;background:linear-gradient(#666,#545454);border:1px solid #353535;border-radius:2px;box-shadow:0 1px 0 #5e5e5e"></div><div style="left:1228.9px;top:338.9px;width:28.8px;height:15.2px;background:#3f3f3f;border:1px solid #353535;border-radius:2px 0 0 2px"></div><div class="t" style="left:1231.6px;top:341.1px;font-size:10px;line-height:12px;color:#ececec;letter-spacing:-0.5px">100%</div><svg style="left:1263px;top:345.7px;" width="5" height="3" viewBox="0 0 5 3"><path d="M0 0H5L2.5 3Z" fill="#e6e6e6"/></svg><div style="left:1084px;top:334px;width:193px;height:1px;background:#444"></div><div class="t" style="left:1089.4px;top:339px;font-size:11px;line-height:13px;transform:scaleX(0.9219);transform-origin:0 0;">锁定:</div><svg style="left:1119px;top:341.5px;" width="9.6" height="9.6" viewBox="0 0 9.6 9.6"><rect x="0.5" y="0.5" width="8.6" height="8.6" fill="#8c8c8c" stroke="#cfcfcf" stroke-width="1"/><path d="M1 1h2.5v2.5h-2.5z M6 1h2.5v2.5h-2.5z M3.5 3.5h2.5v2.5h-2.5z M1 6h2.5v2.5h-2.5z M6 6h2.5v2.5h-2.5z" fill="#d8d8d8"/></svg><svg style="left:1135.5px;top:340px;" width="13.2" height="11.2" viewBox="0 0 13.2 11.2"><path d="M13 0.2 L7.4 6.8 L6 5.6 L12.2 0Z" fill="#d4d4d4"/><path d="M5.4 6.2 L7 7.6 C6.4 10 3 11.4 0.2 10.6 C2.4 9.8 2.8 7.4 5.4 6.2Z" fill="#d4d4d4"/></svg><svg style="left:1154px;top:340.5px;" width="10.4" height="10.4" viewBox="0 0 10.4 10.4"><path d="M5.2 1 V9.4 M1 5.2 H9.4" stroke="#d4d4d4" stroke-width="1.1"/><path d="M5.2 0 l-1.8 2 h3.6z M5.2 10.4 l-1.8 -2 h3.6z M0 5.2 l2 -1.8 v3.6z M10.4 5.2 l-2 -1.8 v3.6z" fill="#d4d4d4"/></svg><svg style="left:1172.9px;top:340px;" width="8.8" height="11" viewBox="0 0 8.8 11"><path d="M2 5 V3.2 A2.4 2.6 0 0 1 6.8 3.2 V5" fill="none" stroke="#d4d4d4" stroke-width="1.3"/><rect x="0.3" y="4.8" width="8.2" height="6" rx="0.8" fill="#d4d4d4"/><rect x="3.9" y="6.6" width="1.1" height="2.4" fill="#444"/></svg><div class="t" style="left:1202.1px;top:339px;font-size:11px;line-height:13px;transform:scaleX(0.8860);transform-origin:0 0;">填充:</div><div style="left:1084px;top:357.5px;width:193px;height:1.2px;background:#3a3a3a"></div><div style="left:1084px;top:358.7px;width:193px;height:459px;background:#454545"></div><div style="left:1265.2px;top:358.7px;width:11.8px;height:459px;background:#4d4d4d;border-left:1px solid #3d3d3d"></div><div class="eye" style="left:1084px;top:358.7px;width:24.6px;height:31.2px;"></div><div class="lrow" style="left:1108.6px;top:358.7px;width:156.6px;height:31.2px;"></div><svg style="left:1091px;top:370.9px;" width="10.4" height="6.4" viewBox="0 0 10.4 6.4"><path d="M0.3 3.2 Q5.2 -2.2 10.1 3.2 Q5.2 8.6 0.3 3.2Z" fill="#4a4a4a" stroke="#c4c4c4" stroke-width="1"/><circle cx="5.4" cy="3" r="1.9" fill="#d4d4d4"/><circle cx="5.4" cy="3" r="0.8" fill="#444"/></svg><div class="th" style="left:1111.4px;top:361.2px;"></div><div class="t" style="left:1144.9px;top:368.9px;font-size:11px;line-height:13px;transform:scaleX(0.9046);transform-origin:0 0;color:#f0f0f0">图层 2</div><div class="eye" style="left:1084px;top:389.9px;width:24.6px;height:31.5px;"></div><div class="lrow" style="left:1108.6px;top:389.9px;width:156.6px;height:31.5px;"></div><svg style="left:1091px;top:402.25px;" width="10.4" height="6.4" viewBox="0 0 10.4 6.4"><path d="M0.3 3.2 Q5.2 -2.2 10.1 3.2 Q5.2 8.6 0.3 3.2Z" fill="#4a4a4a" stroke="#c4c4c4" stroke-width="1"/><circle cx="5.4" cy="3" r="1.9" fill="#d4d4d4"/><circle cx="5.4" cy="3" r="0.8" fill="#444"/></svg><div class="th" style="left:1111.4px;top:392.4px;"></div><div class="t" style="left:1144.9px;top:400.1px;font-size:11px;line-height:13px;transform:scaleX(0.9046);transform-origin:0 0;color:#f0f0f0">图层 1</div><div class="eye" style="left:1084px;top:421.4px;width:24.6px;height:31.3px;"></div><div class="lrow" style="left:1108.6px;top:421.4px;width:156.6px;height:31.3px;"></div><svg style="left:1091px;top:433.65px;" width="10.4" height="6.4" viewBox="0 0 10.4 6.4"><path d="M0.3 3.2 Q5.2 -2.2 10.1 3.2 Q5.2 8.6 0.3 3.2Z" fill="#4a4a4a" stroke="#c4c4c4" stroke-width="1"/><circle cx="5.4" cy="3" r="1.9" fill="#d4d4d4"/><circle cx="5.4" cy="3" r="0.8" fill="#444"/></svg><div class="th" style="left:1111.4px;top:423.9px;"><div style="left:5.5px;top:17.5px;width:4.4px;height:4.8px;background:#f0101c"></div></div><div class="t" style="left:1144.9px;top:431.6px;font-size:11px;line-height:13px;transform:scaleX(0.9046);transform-origin:0 0;color:#f0f0f0">图层 3</div><div class="eye" style="left:1084px;top:452.7px;width:24.6px;height:31.5px;"></div><div class="lrow" style="left:1108.6px;top:452.7px;width:156.6px;height:31.5px;"></div><svg style="left:1091px;top:465.05px;" width="10.4" height="6.4" viewBox="0 0 10.4 6.4"><path d="M0.3 3.2 Q5.2 -2.2 10.1 3.2 Q5.2 8.6 0.3 3.2Z" fill="#4a4a4a" stroke="#c4c4c4" stroke-width="1"/><circle cx="5.4" cy="3" r="1.9" fill="#d4d4d4"/><circle cx="5.4" cy="3" r="0.8" fill="#444"/></svg><div class="th" style="left:1111.4px;top:455.2px;"><div style="left:5.5px;top:7.6px;width:13.4px;height:1.4px;background:linear-gradient(90deg,#222 0,#222 35%,#c66a2a 45%,#222 55%,#222 80%,#c66a2a 90%,#222 100%)"></div></div><div style="left:1149px;top:455.2px;width:25.8px;height:25.6px;background:#000;border:1px solid #2a2a2a"><div style="left:5.6px;top:6.8px;width:14.2px;height:2.4px;background:#fff"></div></div><div class="t" style="left:1182.9px;top:462.9px;font-size:11px;line-height:13px;transform:scaleX(0.9046);transform-origin:0 0;color:#f0f0f0">图层 4</div><div class="eye" style="left:1084px;top:484.2px;width:24.6px;height:31.8px;"></div><div class="lrow" style="left:1108.6px;top:484.2px;width:156.6px;height:31.8px;"></div><svg style="left:1091px;top:496.7px;" width="10.4" height="6.4" viewBox="0 0 10.4 6.4"><path d="M0.3 3.2 Q5.2 -2.2 10.1 3.2 Q5.2 8.6 0.3 3.2Z" fill="#4a4a4a" stroke="#c4c4c4" stroke-width="1"/><circle cx="5.4" cy="3" r="1.9" fill="#d4d4d4"/><circle cx="5.4" cy="3" r="0.8" fill="#444"/></svg><div class="th" style="left:1111.4px;top:486.7px;background:#f6f6f6;background-image:none;"><div style="left:-1px;top:-1px;width:25.4px;height:0.8px;background:#000"></div><div style="left:19.5293px;top:-1px;width:1.44318px;height:0.8px;background:#fff"></div><div style="left:-0.675284px;top:-0.639205px;width:20.1324px;height:2.59773px;background:#000"></div><div style="left:19.6736px;top:-0.747443px;width:4.65426px;height:2.95852px;background:#000"></div><div style="left:-0.675284px;top:4.19545px;width:20.1324px;height:2.59773px;background:#000"></div><div style="left:4.55625px;top:6.82926px;width:14.8648px;height:1.69574px;background:#0a0a14"></div><div style="left:20.1065px;top:4.23153px;width:3.78835px;height:1.19063px;background:#000"></div><div style="left:1.9946px;top:8.84972px;width:4.79858px;height:3.93267px;background:#000"></div><div style="left:7.58693px;top:9.03011px;width:6.96335px;height:3.49972px;background:#000"></div><div style="left:0.154545px;top:10.1125px;width:1.33494px;height:1.37102px;background:#000"></div><div style="left:16.1017px;top:10.1486px;width:1.29886px;height:1.29886px;background:#000"></div><div style="left:21.225px;top:8.41676px;width:3.175px;height:3.06676px;background:#000"></div><div style="left:4.52017px;top:13.2514px;width:4.97898px;height:5.41193px;background:#fb0d17"></div><div style="left:16.3903px;top:16.4264px;width:3.21108px;height:3.28324px;background:#333"></div><div style="left:16.7151px;top:16.7151px;width:2.59773px;height:2.70597px;background:#ddd"></div><div style="left:11.6639px;top:21.694px;width:2.52557px;height:2.70597px;background:#e8801a"></div><div style="left:14.6224px;top:21.7662px;width:7.54063px;height:1.80398px;background:#a03a20"></div><div style="left:22.2352px;top:17.9057px;width:2.09261px;height:6.49432px;background:#b8b0a8"></div></div><div class="t" style="left:1144.9px;top:494.4px;font-size:11px;line-height:13px;transform:scaleX(0.9046);transform-origin:0 0;color:#f0f0f0">图层 0</div><div style="left:1084px;top:817.5px;width:193px;height:15.5px;background:#4c4c4c;border-top:1px solid #3a3a3a"></div><!-- s_bottom --><div style="left:1036px;top:70px;width:13px;height:733.5px;background:linear-gradient(90deg,#323232,#3b3b3b 40%,#424242)"></div><div style="left:36px;top:803.5px;width:1000px;height:13px;background:linear-gradient(#3a3a3a,#303030);border-top:1px solid #2a2a2a"></div><div style="left:1036px;top:803.5px;width:13px;height:13px;background:#4b4b4b"></div><div style="left:36px;top:803.5px;width:38.6px;height:13px;background:#2e2e2e;border-right:1px solid #262626"></div><div class="t" style="left:39.4px;top:804.2px;font-size:10.5px;line-height:12px;color:#ececec;transform:scaleX(.89);transform-origin:0 0">21.34%</div><div style="left:74.6px;top:803.5px;width:19.1px;height:13px;background:#4f4f4f;border-right:1px solid #383838"></div><svg style="left:80.5px;top:806px;" width="8" height="8" viewBox="0 0 8 8"><circle cx="4" cy="4" r="3.6" fill="#cfcfcf"/><path d="M4 4 V1.4 A2.6 2.6 0 0 1 6.6 4Z" fill="#4a4a4a"/><circle cx="4" cy="4" r="2.6" fill="none" stroke="#4a4a4a" stroke-width="0.7"/></svg><div style="left:93.7px;top:803.5px;width:138.6px;height:13px;background:#505050;border-right:1px solid #3a3a3a"></div><div class="t" style="left:122.1px;top:803.6px;font-size:11px;line-height:13px;transform:scaleX(0.8315);transform-origin:0 0;color:#ececec">文档:48.0M/100.0M</div><div style="left:232.3px;top:803.5px;width:8.6px;height:13px;background:#585858;border-right:1px solid #2e2e2e"></div><svg style="left:234.3px;top:806px;" width="5" height="8" viewBox="0 0 5 8"><path d="M0.2 0.3 L4.8 4 L0.2 7.7Z" fill="#f4f4f4"/></svg><div style="left:36px;top:816.5px;width:1013px;height:1.5px;background:#2b2b2b"></div><div style="left:36px;top:818px;width:1013px;height:14px;background:#383838;border-bottom:1px solid #2c2c2c"></div><div style="left:36px;top:818px;width:58.6px;height:14px;background:#535353;border-right:1px solid #2e2e2e"></div><div class="t" style="left:41.6px;top:819px;font-size:10.5px;line-height:12px;color:#e8e8e8;transform:scaleX(.86);transform-origin:0 0">Mini Bridge</div><div style="left:94.6px;top:818px;width:40px;height:14px;background:#414141;border-right:1px solid #2e2e2e"></div><div class="t" style="left:99.7px;top:818.4px;font-size:11px;line-height:13px;transform:scaleX(0.8788);transform-origin:0 0;color:#8e8e8e;text-shadow:none">时间轴</div><svg style="left:1035px;top:821.6px;" width="11" height="6" viewBox="0 0 11 6"><path d="M0 0.5 H4.2 L2.1 3.2Z" fill="#cfcfcf"/><path d="M5 0.5H11M5 2.8H11M5 5.1H11" stroke="#cfcfcf" stroke-width="1"/></svg><svg style="left:1113.6px;top:822px;" width="11.6" height="7" viewBox="0 0 11.6 7"><rect x="0.6" y="0.8" width="6.4" height="5.2" rx="2.6" fill="none" stroke="#d6d6d6" stroke-width="1.3"/><rect x="4.6" y="0.8" width="6.4" height="5.2" rx="2.6" fill="none" stroke="#d6d6d6" stroke-width="1.3"/></svg><div style="left:1136px;top:819.5px;font:italic 11.5px/13px 'Liberation Serif',serif;color:#8c8c8c;letter-spacing:-0.4px">fx</div><svg style="left:1157.9px;top:821.5px;" width="10.6" height="8.4" viewBox="0 0 10.6 8.4"><rect x="0" y="0" width="10.6" height="8.4" fill="#7e7e7e"/><circle cx="5.3" cy="4.2" r="2.5" fill="#5a5a5a"/></svg><svg style="left:1179.9px;top:820.5px;" width="11" height="10.5" viewBox="0 0 11 10.5"><circle cx="4.6" cy="4.6" r="4" fill="#4a4a4a" stroke="#d2d2d2" stroke-width="1.1"/><path d="M1.8 7.4 A4 4 0 0 1 7.4 1.8Z" fill="#d2d2d2"/><rect x="9" y="8.6" width="1.6" height="1.4" fill="#d2d2d2"/></svg><svg style="left:1200.7px;top:822px;" width="10.4" height="8" viewBox="0 0 10.4 8"><path d="M0 1 H3.6 L4.6 0 H10.4 V8 H0Z" fill="#7c7c7c"/></svg><svg style="left:1223.7px;top:821.5px;" width="8.6" height="9" viewBox="0 0 8.6 9"><path d="M0 0 H8.6 V9 H3 L0 6Z" fill="#7c7c7c"/><path d="M0 6 H3 V9Z" fill="#5a5a5a"/></svg><svg style="left:1245.2px;top:821px;" width="9" height="9.6" viewBox="0 0 9 9.6"><path d="M0.4 1.6 H8.6 M3 1.4 V0.4 H6 V1.4" stroke="#6e6e6e" stroke-width="1" fill="none"/><path d="M1.2 2.6 H7.8 L7.2 9.4 H1.8Z" fill="#686868"/></svg><svg style="left:1192px;top:807px" width="80" height="20" viewBox="0 0 80 20" shape-rendering="crispEdges" role="img" aria-label="@Vefans"><title>@Vefans</title><path d="M6 0h2v2h-2zM8 0h2v2h-2zM10 0h2v2h-2zM18 0h2v2h-2zM26 0h2v2h-2zM44 0h2v2h-2zM4 2h2v2h-2zM12 2h2v2h-2zM16 2h2v2h-2zM20 2h2v2h-2zM24 2h2v2h-2zM28 2h2v2h-2zM42 2h2v2h-2zM46 2h2v2h-2zM2 4h2v2h-2zM6 4h2v2h-2zM8 4h2v2h-2zM10 4h2v2h-2zM14 4h2v2h-2zM16 4h2v2h-2zM20 4h2v2h-2zM24 4h2v2h-2zM28 4h2v2h-2zM32 4h2v2h-2zM34 4h2v2h-2zM40 4h2v2h-2zM44 4h2v2h-2zM50 4h2v2h-2zM52 4h2v2h-2zM58 4h2v2h-2zM60 4h2v2h-2zM62 4h2v2h-2zM70 4h2v2h-2zM72 4h2v2h-2zM74 4h2v2h-2zM0 6h2v2h-2zM4 6h2v2h-2zM6 6h2v2h-2zM10 6h2v2h-2zM12 6h2v2h-2zM16 6h2v2h-2zM20 6h2v2h-2zM24 6h2v2h-2zM28 6h2v2h-2zM30 6h2v2h-2zM36 6h2v2h-2zM38 6h2v2h-2zM46 6h2v2h-2zM48 6h2v2h-2zM54 6h2v2h-2zM56 6h2v2h-2zM64 6h2v2h-2zM68 6h2v2h-2zM76 6h2v2h-2zM0 8h2v2h-2zM4 8h2v2h-2zM8 8h2v2h-2zM12 8h2v2h-2zM16 8h2v2h-2zM20 8h2v2h-2zM24 8h2v2h-2zM28 8h2v2h-2zM32 8h2v2h-2zM34 8h2v2h-2zM38 8h2v2h-2zM40 8h2v2h-2zM44 8h2v2h-2zM50 8h2v2h-2zM52 8h2v2h-2zM56 8h2v2h-2zM60 8h2v2h-2zM62 8h2v2h-2zM66 8h2v2h-2zM70 8h2v2h-2zM72 8h2v2h-2zM74 8h2v2h-2zM0 10h2v2h-2zM4 10h2v2h-2zM8 10h2v2h-2zM12 10h2v2h-2zM16 10h2v2h-2zM20 10h2v2h-2zM24 10h2v2h-2zM28 10h2v2h-2zM38 10h2v2h-2zM40 10h2v2h-2zM44 10h2v2h-2zM48 10h2v2h-2zM56 10h2v2h-2zM60 10h2v2h-2zM62 10h2v2h-2zM66 10h2v2h-2zM68 10h2v2h-2zM74 10h2v2h-2zM0 12h2v2h-2zM4 12h2v2h-2zM8 12h2v2h-2zM12 12h2v2h-2zM16 12h2v2h-2zM18 12h2v2h-2zM22 12h2v2h-2zM26 12h2v2h-2zM28 12h2v2h-2zM32 12h2v2h-2zM34 12h2v2h-2zM36 12h2v2h-2zM40 12h2v2h-2zM44 12h2v2h-2zM46 12h2v2h-2zM50 12h2v2h-2zM52 12h2v2h-2zM56 12h2v2h-2zM60 12h2v2h-2zM62 12h2v2h-2zM66 12h2v2h-2zM68 12h2v2h-2zM70 12h2v2h-2zM72 12h2v2h-2zM76 12h2v2h-2zM0 14h2v2h-2zM4 14h2v2h-2zM6 14h2v2h-2zM14 14h2v2h-2zM20 14h2v2h-2zM24 14h2v2h-2zM30 14h2v2h-2zM38 14h2v2h-2zM40 14h2v2h-2zM44 14h2v2h-2zM48 14h2v2h-2zM56 14h2v2h-2zM60 14h2v2h-2zM62 14h2v2h-2zM66 14h2v2h-2zM74 14h2v2h-2zM2 16h2v2h-2zM8 16h2v2h-2zM10 16h2v2h-2zM12 16h2v2h-2zM22 16h2v2h-2zM32 16h2v2h-2zM34 16h2v2h-2zM36 16h2v2h-2zM42 16h2v2h-2zM50 16h2v2h-2zM52 16h2v2h-2zM54 16h2v2h-2zM58 16h2v2h-2zM64 16h2v2h-2zM68 16h2v2h-2zM70 16h2v2h-2zM72 16h2v2h-2z" fill="#000"/><path d="M6 2h2v2h-2zM8 2h2v2h-2zM10 2h2v2h-2zM18 2h2v2h-2zM26 2h2v2h-2zM44 2h2v2h-2zM4 4h2v2h-2zM12 4h2v2h-2zM18 4h2v2h-2zM26 4h2v2h-2zM42 4h2v2h-2zM2 6h2v2h-2zM8 6h2v2h-2zM14 6h2v2h-2zM18 6h2v2h-2zM26 6h2v2h-2zM32 6h2v2h-2zM34 6h2v2h-2zM40 6h2v2h-2zM42 6h2v2h-2zM44 6h2v2h-2zM50 6h2v2h-2zM52 6h2v2h-2zM58 6h2v2h-2zM60 6h2v2h-2zM62 6h2v2h-2zM70 6h2v2h-2zM72 6h2v2h-2zM74 6h2v2h-2zM2 8h2v2h-2zM6 8h2v2h-2zM10 8h2v2h-2zM14 8h2v2h-2zM18 8h2v2h-2zM26 8h2v2h-2zM30 8h2v2h-2zM36 8h2v2h-2zM42 8h2v2h-2zM54 8h2v2h-2zM58 8h2v2h-2zM64 8h2v2h-2zM68 8h2v2h-2zM2 10h2v2h-2zM6 10h2v2h-2zM10 10h2v2h-2zM14 10h2v2h-2zM18 10h2v2h-2zM26 10h2v2h-2zM30 10h2v2h-2zM32 10h2v2h-2zM34 10h2v2h-2zM36 10h2v2h-2zM42 10h2v2h-2zM50 10h2v2h-2zM52 10h2v2h-2zM54 10h2v2h-2zM58 10h2v2h-2zM64 10h2v2h-2zM70 10h2v2h-2zM72 10h2v2h-2zM2 12h2v2h-2zM6 12h2v2h-2zM10 12h2v2h-2zM14 12h2v2h-2zM20 12h2v2h-2zM24 12h2v2h-2zM30 12h2v2h-2zM42 12h2v2h-2zM48 12h2v2h-2zM54 12h2v2h-2zM58 12h2v2h-2zM64 12h2v2h-2zM74 12h2v2h-2zM2 14h2v2h-2zM8 14h2v2h-2zM10 14h2v2h-2zM12 14h2v2h-2zM22 14h2v2h-2zM32 14h2v2h-2zM34 14h2v2h-2zM36 14h2v2h-2zM42 14h2v2h-2zM50 14h2v2h-2zM52 14h2v2h-2zM54 14h2v2h-2zM58 14h2v2h-2zM64 14h2v2h-2zM68 14h2v2h-2zM70 14h2v2h-2zM72 14h2v2h-2z" fill="#fff"/></svg><div style="left:0px;top:0px;width:1281px;height:837px;border:1px solid #1c1c1c;border-radius:5px 5px 0 0;border-bottom:3px solid #262626;border-right:2px solid #1f1f1f;pointer-events:none"></div><div style="left:1277px;top:54px;width:2px;height:783px;background:#2a2a2a"></div><div style="left:0px;top:833px;width:1281px;height:1.5px;background:#3a3a3a"></div></body></html>
